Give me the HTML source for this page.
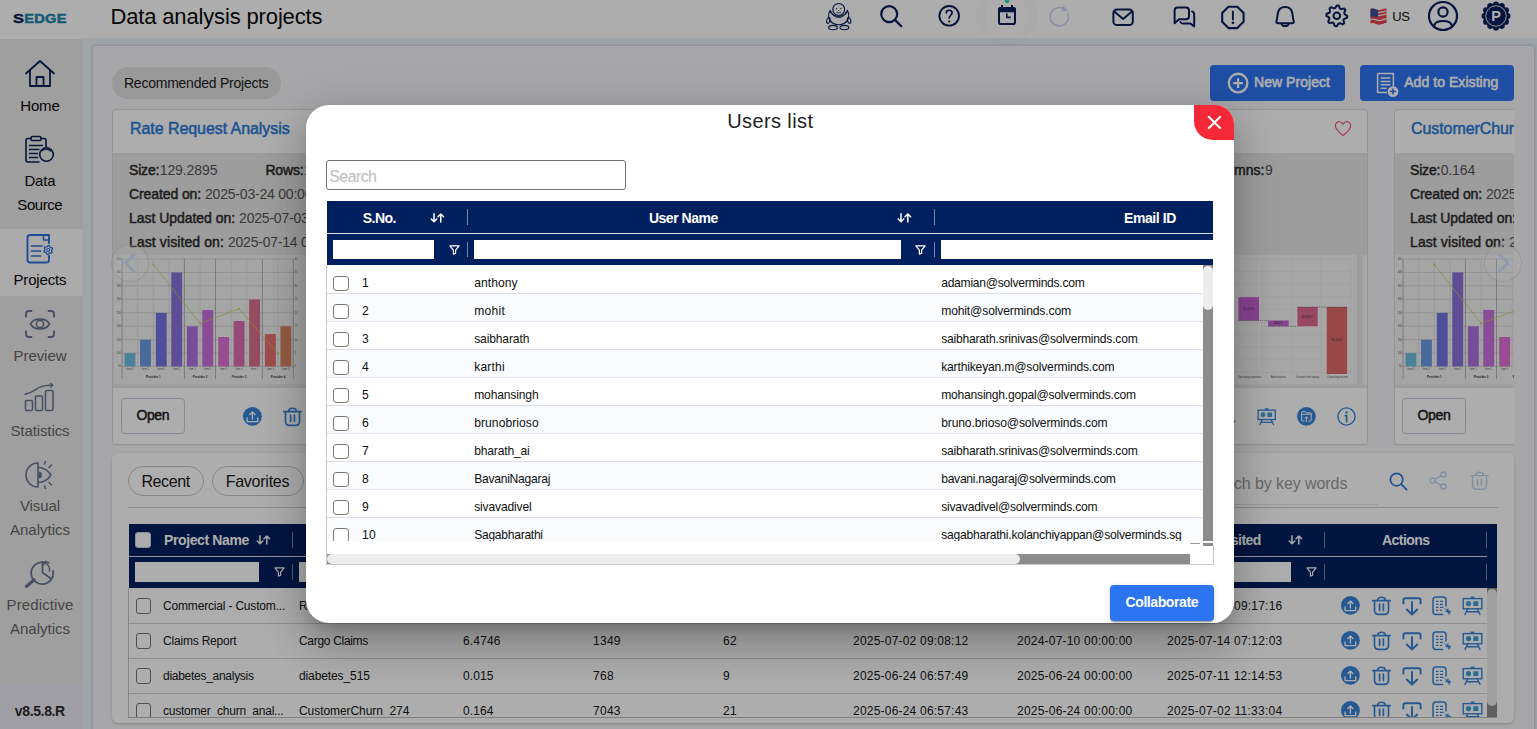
<!DOCTYPE html><html><head><meta charset="utf-8"><title>Data analysis projects</title><style>html,body{margin:0;padding:0;}body{width:1537px;height:729px;overflow:hidden;position:relative;font-family:"Liberation Sans", sans-serif;background:#e9f2f8;}#app{position:absolute;left:0;top:0;width:1537px;height:729px;overflow:hidden;}svg{overflow:visible;display:block}</style></head><body><div id="app">
<div style="position:absolute;left:0px;top:0px;width:1537px;height:729px;background:#e9f2f8;"></div>
<div style="position:absolute;left:0px;top:0px;width:1537px;height:38px;background:#ffffff;"></div>
<div style="position:absolute;left:0px;top:38px;width:83px;height:1px;background:#fff;"></div>
<div style="position:absolute;left:0px;top:39px;width:83px;height:690px;background:#ebebeb;"></div>
<div style="position:absolute;left:0px;top:229px;width:83px;height:67px;background:#fcfcfe;"></div>
<div style="position:absolute;left:0px;top:683px;width:83px;height:46px;background:#ebeaf3;"></div>
<div style="position:absolute;left:93px;top:46px;width:1441px;height:700px;background:#f6f6f9;border-radius:3px;box-shadow:0 0 3px .5px rgba(0,0,0,.15);"></div>
<span id="logo" style="position:absolute;left:12.6px;top:10px;-webkit-text-stroke:.45px currentColor;font-size:13px;line-height:18px;font-weight:700;letter-spacing:0.2px;transform-origin:0 50%;transform:scaleX(1.22);white-space:nowrap;"><span style="color:#0d1b56;font-size:13.5px">S</span><span style="color:#1b86ad;font-size:12px">EDGE</span></span>
<span id="title" style="position:absolute;left:110.40px;top:4.38px;font-size:22px;line-height:26px;color:#0a0a0a;font-weight:400;white-space:nowrap;letter-spacing:-0.146px;">Data analysis projects</span>
<svg style="position:absolute;left:824px;top:0px;" width="30" height="31" viewBox="0 0 30 31" fill="none"><circle cx="14.7" cy="9.4" r="5.9" stroke="#0b1f5c" stroke-width="1.1"/><circle cx="12.6" cy="8.6" r=".7" fill="#0b1f5c"/><circle cx="16.8" cy="8.6" r=".7" fill="#0b1f5c"/><circle cx="14.7" cy="10.6" r=".5" fill="#0b1f5c"/><path d="M12.6 12.4 q2.1 1.2 4.2 0" stroke="#0b1f5c" stroke-width="0.7" stroke-linecap="round" stroke-linejoin="round" /><path d="M6.2 10.4 C3.4 14 4.4 20.6 8.6 23 C12.4 25.2 17 25.2 20.8 23 C25 20.6 26 14 23.2 10.4 C23 13.4 19.6 16.4 14.7 16.4 C9.8 16.4 6.4 13.4 6.2 10.4 Z" stroke="#0b1f5c" stroke-width="1.2" stroke-linecap="round" stroke-linejoin="round" /><path d="M7.4 11.8 C8.4 15.6 11.2 17.6 14.7 17.6 C18.2 17.6 21 15.6 22 11.8" stroke="#0b1f5c" stroke-width="0.8" stroke-linecap="round" stroke-linejoin="round" /><ellipse cx="4.3" cy="20.4" rx="1.6" ry="3" stroke="#0b1f5c" stroke-width="1.1" transform="rotate(14 4.3 20.4)"/><ellipse cx="25.1" cy="20.4" rx="1.6" ry="3" stroke="#0b1f5c" stroke-width="1.1" transform="rotate(-14 25.1 20.4)"/><ellipse cx="9" cy="27.6" rx="4.4" ry="2.2" stroke="#0b1f5c" stroke-width="1.1"/><ellipse cx="20.4" cy="27.6" rx="4.4" ry="2.2" stroke="#0b1f5c" stroke-width="1.1"/></svg>
<svg style="position:absolute;left:878px;top:3px;" width="28" height="28" viewBox="0 0 28 28" fill="none"><circle cx="11.2" cy="11.1" r="8" stroke="#0b1f5c" stroke-width="2.2"/><path d="M17 16.9 L23.3 23.2" stroke="#0b1f5c" stroke-width="2.3" stroke-linecap="round" stroke-linejoin="round" /></svg>
<svg style="position:absolute;left:936px;top:3px;" width="26" height="26" viewBox="0 0 26 26" fill="none"><circle cx="13.2" cy="12.8" r="9.8" stroke="#0b1f5c" stroke-width="1.9"/><path d="M10.3 9.8 C10.3 6.4 16.1 6.4 16.1 9.8 C16.1 12.2 13.2 12.4 13.2 15" stroke="#0b1f5c" stroke-width="1.7" stroke-linecap="round" stroke-linejoin="round" /><circle cx="13.2" cy="18.5" r="1.1" fill="#0b1f5c"/></svg>
<div style="position:absolute;left:976px;top:-15px;width:62px;height:62px;border-radius:50%;box-sizing:border-box;border:10px solid rgba(0,0,0,.016);"></div>
<svg style="position:absolute;left:996px;top:-2px;" width="22" height="28" viewBox="0 0 22 28" fill="none"><circle cx="11" cy="3" r="2.2" fill="#26dcb7"/><rect x="3" y="10" width="16" height="16" rx="1.8" stroke="#0b1f5c" stroke-width="2"/><rect x="2.2" y="9.2" width="17.6" height="5" rx="1.5" fill="#0b1f5c"/><rect x="5" y="7" width="2" height="3" fill="#0b1f5c"/><rect x="15" y="7" width="2" height="3" fill="#0b1f5c"/><path d="M10.8 16 V19.4 H14" stroke="#0b1f5c" stroke-width="1.6" stroke-linecap="round" stroke-linejoin="round" stroke-linecap="butt" stroke-linejoin="miter"/></svg>
<svg style="position:absolute;left:1046px;top:4px;" width="28" height="28" viewBox="0 0 28 28" fill="none"><path d="M21.89 9.40 A9.2 9.2 0 1 1 18.18 4.90" stroke="#cbd4ee" stroke-width="1.6" stroke-linecap="round" stroke-linejoin="round" /><path d="M16.98 1.50 L21.78 6.50 L15.78 7.50 Z" fill="#cbd4ee"/></svg>
<svg style="position:absolute;left:1110px;top:7px;" width="27" height="21" viewBox="0 0 27 21" fill="none"><rect x="3.4" y="2.5" width="19.4" height="15.6" rx="3.6" stroke="#0b1f5c" stroke-width="2"/><path d="M4.6 4.8 L13.1 12 L21.6 4.8" stroke="#0b1f5c" stroke-width="2" stroke-linecap="round" stroke-linejoin="round" /></svg>
<svg style="position:absolute;left:1171px;top:4px;" width="27" height="26" viewBox="0 0 27 26" fill="none"><path d="M6.6 3.5 H15 Q18 3.5 18 6.5 V12.3 Q18 15.3 15 15.3 H8 L3.6 19.3 V6.5 Q3.6 3.5 6.6 3.5 Z" stroke="#0b1f5c" stroke-width="2" stroke-linecap="round" stroke-linejoin="round" /><path d="M21 7.4 Q23.2 8 23.2 10.6 V22.4 L19.4 19.6 H12.4 Q10 19.6 9.4 18" stroke="#0b1f5c" stroke-width="2" stroke-linecap="round" stroke-linejoin="round" /></svg>
<svg style="position:absolute;left:1219px;top:3px;" width="28" height="28" viewBox="0 0 28 28" fill="none"><path d="M9.5 3.7 H18.3 L24.6 10 V18.8 L18.3 25.1 H9.5 L3.2 18.8 V10 Z" stroke="#0b1f5c" stroke-width="2.1" stroke-linecap="round" stroke-linejoin="round" stroke-linejoin="round"/><path d="M13.9 8.4 V16.6" stroke="#0b1f5c" stroke-width="1.9" stroke-linecap="round" stroke-linejoin="round" /><circle cx="13.9" cy="19.8" r="1.35" fill="#0b1f5c"/></svg>
<svg style="position:absolute;left:1273px;top:3px;" width="24" height="28" viewBox="0 0 24 28" fill="none"><path d="M5 20.2 Q3 20.2 3.5 18.2 C4.3 15 4.5 12 4.9 10 C5.7 5.6 8.6 3.9 12.1 3.9 C15.6 3.9 18.5 5.6 19.3 10 C19.7 12 19.9 15 20.7 18.2 Q21.2 20.2 19.2 20.2 Z" stroke="#0b1f5c" stroke-width="2" stroke-linecap="round" stroke-linejoin="round" /><path d="M8.6 20.8 C9 23.8 15.2 23.8 15.6 20.8" stroke="#0b1f5c" stroke-width="1.9" stroke-linecap="round" stroke-linejoin="round" /></svg>
<svg style="position:absolute;left:1324px;top:3px;" width="26" height="26" viewBox="0 0 26 26" fill="none"><path d="M12.80 2.40 L14.83 2.60 L15.86 5.41 L17.24 6.15 L20.15 5.45 L21.45 7.02 L20.19 9.74 L20.65 11.24 L23.20 12.80 L23.00 14.83 L20.19 15.86 L19.45 17.24 L20.15 20.15 L18.58 21.45 L15.86 20.19 L14.36 20.65 L12.80 23.20 L10.77 23.00 L9.74 20.19 L8.36 19.45 L5.45 20.15 L4.15 18.58 L5.41 15.86 L4.95 14.36 L2.40 12.80 L2.60 10.77 L5.41 9.74 L6.15 8.36 L5.45 5.45 L7.02 4.15 L9.74 5.41 L11.24 4.95 Z" stroke="#0b1f5c" stroke-width="2" stroke-linecap="round" stroke-linejoin="round" /><circle cx="12.8" cy="12.8" r="3.3" stroke="#0b1f5c" stroke-width="2"/></svg>
<svg style="position:absolute;left:1369px;top:5.5px;" width="19" height="21" viewBox="0 0 19 21" fill="none"><path d="M1.5 3 C5 1 8 5 11 4 C13.5 3.3 15.5 2 17.5 2.5 V17 C15.5 16.5 13.5 18 11 18.6 C8 19.3 5 15.5 1.5 17.5 Z" fill="#e8404f"/><path d="M1.5 3 C4 1.6 6.5 3.4 9 4 V11.5 C6.5 11 4 9.5 1.5 11 Z" fill="#3f4fa0"/><path d="M9 6.6 C12 7 14.5 5 17.5 5.2 M9 9.6 C12 10 14.5 8 17.5 8.2 M1.5 13.6 C5 11.8 8 15 11 14.6 C13.5 14.2 15.5 12.4 17.5 12.8" stroke="#f4f4f4" stroke-width="1.3"/></svg>
<span id="us" style="position:absolute;left:1392.30px;top:8.60px;font-size:13px;line-height:16px;color:#111;font-weight:400;white-space:nowrap;letter-spacing:-0.531px;">US</span>
<svg style="position:absolute;left:1426px;top:-1px;" width="34" height="34" viewBox="0 0 34 34" fill="none"><circle cx="17" cy="17" r="14" stroke="#0b1f5c" stroke-width="2.2"/><circle cx="17" cy="13" r="4.6" stroke="#0b1f5c" stroke-width="2.2"/><path d="M8.2 26.5 C9.5 20.5 24.5 20.5 25.8 26.5" stroke="#0b1f5c" stroke-width="2.2" stroke-linecap="round" stroke-linejoin="round" /></svg>
<svg style="position:absolute;left:1481px;top:0.8px;" width="30" height="30" viewBox="0 0 30 30" fill="none"><circle cx="26.40" cy="15.00" r="3.1" fill="#0b1f5c"/><circle cx="24.87" cy="20.70" r="3.1" fill="#0b1f5c"/><circle cx="20.70" cy="24.87" r="3.1" fill="#0b1f5c"/><circle cx="15.00" cy="26.40" r="3.1" fill="#0b1f5c"/><circle cx="9.30" cy="24.87" r="3.1" fill="#0b1f5c"/><circle cx="5.13" cy="20.70" r="3.1" fill="#0b1f5c"/><circle cx="3.60" cy="15.00" r="3.1" fill="#0b1f5c"/><circle cx="5.13" cy="9.30" r="3.1" fill="#0b1f5c"/><circle cx="9.30" cy="5.13" r="3.1" fill="#0b1f5c"/><circle cx="15.00" cy="3.60" r="3.1" fill="#0b1f5c"/><circle cx="20.70" cy="5.13" r="3.1" fill="#0b1f5c"/><circle cx="24.87" cy="9.30" r="3.1" fill="#0b1f5c"/><circle cx="15" cy="15" r="12" fill="#0b1f5c"/><circle cx="15" cy="15" r="10.2" stroke="#fff" stroke-width=".8"/><text x="15.2" y="20.2" text-anchor="middle" font-family="Liberation Sans, sans-serif" font-weight="700" font-size="14.5" fill="#fff">P</text></svg>
<svg style="position:absolute;left:23px;top:58px;" width="34" height="32" viewBox="0 0 34 32" fill="none"><path d="M3 15.5 L17 3 L31 15.5" stroke="#0d2057" stroke-width="1.8" stroke-linecap="round" stroke-linejoin="round" /><path d="M7 12.5 V28 H27 V12.5" stroke="#0d2057" stroke-width="1.8" stroke-linecap="round" stroke-linejoin="round" /><path d="M13.5 28 V19 H20.5 V28" stroke="#0d2057" stroke-width="1.8" stroke-linecap="round" stroke-linejoin="round" /></svg>
<span id="sb1" style="position:absolute;left:40.00px;transform:translateX(-50%);top:96.90px;font-size:15px;line-height:18px;color:#0a0a0a;font-weight:400;white-space:nowrap;letter-spacing:-0.129px;margin-left:-0.065px;">Home</span>
<svg style="position:absolute;left:23px;top:134px;" width="34" height="32" viewBox="0 0 34 32" fill="none"><path d="M8 4.5 H5 Q3 4.5 3 6.5 V26 Q3 28 5 28 H16" stroke="#0d2057" stroke-width="1.6" stroke-linecap="round" stroke-linejoin="round" /><path d="M18 4.5 H21 Q23 4.5 23 6.5 V13" stroke="#0d2057" stroke-width="1.6" stroke-linecap="round" stroke-linejoin="round" /><rect x="8" y="2.5" width="10" height="4" rx="1.2" stroke="#0d2057" stroke-width="1.5"/><path d="M6.5 11.5 H19.5 M6.5 15.5 H16 M6.5 19.5 H14.5 M6.5 23.5 H14.5" stroke="#0d2057" stroke-width="1.5" stroke-linecap="round" stroke-linejoin="round" /><circle cx="23.5" cy="20.5" r="6.8" stroke="#0d2057" stroke-width="1.6" fill="#ebebeb"/><path d="M19.3 16.6 A6 6 0 0 1 27.5 17" stroke="#0d2057" stroke-width="1.2" stroke-linecap="round" stroke-linejoin="round" /></svg>
<span id="sb2" style="position:absolute;left:40.00px;transform:translateX(-50%);top:172.10px;font-size:15px;line-height:18px;color:#0a0a0a;font-weight:400;white-space:nowrap;letter-spacing:-0.172px;margin-left:-0.086px;">Data</span>
<span id="sb3" style="position:absolute;left:40.00px;transform:translateX(-50%);top:196.30px;font-size:15px;line-height:18px;color:#0a0a0a;font-weight:400;white-space:nowrap;letter-spacing:-0.422px;margin-left:-0.211px;">Source</span>
<svg style="position:absolute;left:24px;top:232px;" width="34" height="34" viewBox="0 0 34 34" fill="none"><path d="M19.5 3 H6 Q3.5 3 3.5 5.5 V28 Q3.5 30.5 6 30.5 H22.5 Q25 30.5 25 28 V24" stroke="#2f6fdb" stroke-width="1.9" stroke-linecap="round" stroke-linejoin="round" /><path d="M19.5 3 H25 V11" stroke="#2f6fdb" stroke-width="1.9" stroke-linecap="round" stroke-linejoin="round" /><path d="M19.5 3 V8 H25" stroke="#2f6fdb" stroke-width="1.5" stroke-linecap="round" stroke-linejoin="round" /><path d="M7.5 14 H18 M7.5 19 H16.5 M7.5 24 H16.5" stroke="#2f6fdb" stroke-width="1.7" stroke-linecap="round" stroke-linejoin="round" /><path d="M24.20 13.40 L25.39 13.56 L25.90 15.06 L26.60 15.60 L28.18 15.70 L28.64 16.81 L27.60 18.00 L27.48 18.88 L28.18 20.30 L27.45 21.25 L25.90 20.94 L25.08 21.28 L24.20 22.60 L23.01 22.44 L22.50 20.94 L21.80 20.40 L20.22 20.30 L19.76 19.19 L20.80 18.00 L20.92 17.12 L20.22 15.70 L20.95 14.75 L22.50 15.06 L23.32 14.72 Z" stroke="#2f6fdb" stroke-width="1.2" stroke-linecap="round" stroke-linejoin="round" /><circle cx="24.2" cy="18" r="1.5" stroke="#2f6fdb" stroke-width="1.1"/></svg>
<span id="sb4" style="position:absolute;left:40.00px;transform:translateX(-50%);top:270.90px;font-size:15px;line-height:18px;color:#0a0a0a;font-weight:400;white-space:nowrap;letter-spacing:-0.148px;margin-left:-0.074px;">Projects</span>
<svg style="position:absolute;left:23px;top:307px;" width="34" height="34" viewBox="0 0 34 34" fill="none"><path d="M3 9.5 V7 Q3 4 6 4 H8.5 M25.5 4 H28 Q31 4 31 7 V9.5 M31 24.5 V27 Q31 30 28 30 H25.5 M8.5 30 H6 Q3 30 3 27 V24.5" stroke="#68758f" stroke-width="1.8" stroke-linecap="round" stroke-linejoin="round" /><path d="M7.5 17 C11 10.5 23 10.5 26.5 17 C23 23.5 11 23.5 7.5 17 Z" stroke="#68758f" stroke-width="1.6" stroke-linecap="round" stroke-linejoin="round" /><circle cx="17" cy="17" r="3.6" stroke="#68758f" stroke-width="1.6"/></svg>
<span id="sb5" style="position:absolute;left:40.00px;transform:translateX(-50%);top:346.90px;font-size:15px;line-height:18px;color:#666;font-weight:400;white-space:nowrap;letter-spacing:-0.051px;margin-left:-0.025px;">Preview</span>
<svg style="position:absolute;left:23px;top:382px;" width="34" height="32" viewBox="0 0 34 32" fill="none"><rect x="2.5" y="18.5" width="7" height="10" rx="1" stroke="#68758f" stroke-width="1.5"/><rect x="12.5" y="14" width="7" height="14.5" rx="1" stroke="#68758f" stroke-width="1.5"/><rect x="22.5" y="8.5" width="7.5" height="20" rx="1.5" stroke="#68758f" stroke-width="1.5"/><path d="M2.5 12 C9 11 12 8 16 5.5 C20 3.5 25 3.5 29.5 3" stroke="#68758f" stroke-width="1.3" stroke-linecap="round" stroke-linejoin="round" /><path d="M27.5 1.5 L30 3 L27.8 5" stroke="#68758f" stroke-width="1.2" stroke-linecap="round" stroke-linejoin="round" /><circle cx="2.5" cy="12" r="1" fill="#68758f"/></svg>
<span id="sb6" style="position:absolute;left:40.00px;transform:translateX(-50%);top:421.80px;font-size:15px;line-height:18px;color:#666;font-weight:400;white-space:nowrap;letter-spacing:-0.102px;margin-left:-0.051px;">Statistics</span>
<svg style="position:absolute;left:23px;top:458px;" width="34" height="34" viewBox="0 0 34 34" fill="none"><path d="M15 5 A12 12 0 0 0 15 29 Z" stroke="#68758f" stroke-width="1.6" stroke-linecap="round" stroke-linejoin="round" /><path d="M15.5 9.5 C22 9.5 26 14 28 17 C26 20 22 24.5 15.5 24.5" stroke="#68758f" stroke-width="1.6" stroke-linecap="round" stroke-linejoin="round" /><path d="M15.5 13.5 A3.5 3.5 0 0 1 15.5 20.5 Z" fill="#68758f"/><path d="M21.5 6 L22.5 3.5 M26 9.5 L28.5 7 M26 24.5 L28.5 27 M21.5 28 L22.5 30.5" stroke="#68758f" stroke-width="1.5" stroke-linecap="round" stroke-linejoin="round" /></svg>
<span id="sb7" style="position:absolute;left:40.00px;transform:translateX(-50%);top:497.00px;font-size:15px;line-height:18px;color:#666;font-weight:400;white-space:nowrap;letter-spacing:-0.099px;margin-left:-0.050px;">Visual</span>
<span id="sb8" style="position:absolute;left:40.00px;transform:translateX(-50%);top:521.10px;font-size:15px;line-height:18px;color:#666;font-weight:400;white-space:nowrap;letter-spacing:-0.003px;margin-left:-0.002px;">Analytics</span>
<svg style="position:absolute;left:23px;top:557px;" width="34" height="34" viewBox="0 0 34 34" fill="none"><path d="M20.5 5.2 A11 11 0 1 0 30 14" stroke="#68758f" stroke-width="1.8" stroke-linecap="round" stroke-linejoin="round" /><path d="M19.5 5 V15.5 L27.8 21.5" stroke="#68758f" stroke-width="1.7" stroke-linecap="round" stroke-linejoin="round" /><path d="M26.5 14 A8 8 0 0 0 21.5 5.5" stroke="#68758f" stroke-width="1.5" stroke-linecap="round" stroke-linejoin="round" /><path d="M20.5 7.8 L22.2 4.5 L25.8 5.8" stroke="#68758f" stroke-width="1.5" stroke-linecap="round" stroke-linejoin="round" /><path d="M11 23 L3.5 29.5" stroke="#68758f" stroke-width="3.2" stroke-linecap="round" stroke-linejoin="round" /></svg>
<span id="sb9" style="position:absolute;left:40.00px;transform:translateX(-50%);top:596.00px;font-size:15px;line-height:18px;color:#666;font-weight:400;white-space:nowrap;letter-spacing:0.114px;margin-left:0.057px;">Predictive</span>
<span id="sb10" style="position:absolute;left:40.00px;transform:translateX(-50%);top:620.10px;font-size:15px;line-height:18px;color:#666;font-weight:400;white-space:nowrap;letter-spacing:-0.003px;margin-left:-0.002px;">Analytics</span>
<span id="ver" style="position:absolute;left:40.00px;transform:translateX(-50%);top:702.95px;font-size:14px;line-height:17px;color:#2c2c2c;font-weight:700;white-space:nowrap;letter-spacing:-0.367px;margin-left:-0.183px;">v8.5.8.R</span>
<div style="position:absolute;left:112px;top:67px;width:169px;height:32px;background:#e2e2e2;border-radius:16px;"></div>
<span id="pill" style="position:absolute;left:124.00px;top:75.35px;font-size:14px;line-height:17px;color:#1a1a1a;font-weight:400;white-space:nowrap;letter-spacing:-0.239px;">Recommended Projects</span>
<div style="position:absolute;left:1210px;top:65px;width:135px;height:36px;background:#2e75f4;border-radius:4px;"></div>
<svg style="position:absolute;left:1227px;top:72.2px;" width="22" height="22" viewBox="0 0 22 22" fill="none"><circle cx="11.1" cy="11.1" r="9.3" stroke="#fff" stroke-width="2.4"/><path d="M11.1 6.2 V16 M6.2 11.1 H16" stroke="#fff" stroke-width="2.2"/></svg>
<span id="btn1" style="position:absolute;left:1254.00px;top:73.95px;font-size:14px;line-height:17px;color:#fff;font-weight:400;white-space:nowrap;letter-spacing:0.045px;-webkit-text-stroke:.55px #fff;">New Project</span>
<div style="position:absolute;left:1360px;top:65px;width:154px;height:36px;background:#2e75f4;border-radius:4px;"></div>
<svg style="position:absolute;left:1376px;top:72px;" width="24" height="26" viewBox="0 0 24 26" fill="none"><path d="M1.6 1.6 H17.4 V15 M11 20.4 H1.6 V1.6" stroke="#fff" stroke-width="1.5"/><path d="M4.6 6 H14.4 M4.6 9.4 H14.4 M4.6 12.8 H14.4 M4.6 16.2 H10.5" stroke="#fff" stroke-width="1.5"/><circle cx="17" cy="19.6" r="5.4" fill="#fff"/><path d="M17 16.6 V22.6 M14 19.6 H20" stroke="#2e75f4" stroke-width="1.5"/></svg>
<span id="btn2" style="position:absolute;left:1404.20px;top:73.95px;font-size:14px;line-height:17px;color:#fff;font-weight:400;white-space:nowrap;letter-spacing:0.059px;-webkit-text-stroke:.55px #fff;">Add to Existing</span>
<div style="position:absolute;left:112px;top:100px;width:1402px;height:350px;overflow:hidden;"><div style="position:absolute;left:-112px;top:-100px;"><div style="position:absolute;left:112px;top:109px;width:615px;height:336px;box-sizing:border-box;border:1px solid #dadada;border-radius:4px;background:#e8e8e8;overflow:hidden;box-shadow:0 1px 1px rgba(0,0,0,.04);"><div style="position:absolute;left:0;top:0;right:0;height:42.5px;background:#fff;"></div><div style="position:absolute;left:0;top:278px;right:0;height:56px;background:#fff;"></div></div>
<div style="position:absolute;left:754px;top:109px;width:614px;height:336px;box-sizing:border-box;border:1px solid #dadada;border-radius:4px;background:#e8e8e8;overflow:hidden;box-shadow:0 1px 1px rgba(0,0,0,.04);"><div style="position:absolute;left:0;top:0;right:0;height:42.5px;background:#fff;"></div><div style="position:absolute;left:0;top:278px;right:0;height:56px;background:#fff;"></div></div>
<div style="position:absolute;left:1393.9px;top:109px;width:614px;height:336px;box-sizing:border-box;border:1px solid #dadada;border-radius:4px;background:#e8e8e8;overflow:hidden;box-shadow:0 1px 1px rgba(0,0,0,.04);"><div style="position:absolute;left:0;top:0;right:0;height:42.5px;background:#fff;"></div><div style="position:absolute;left:0;top:278px;right:0;height:56px;background:#fff;"></div></div>
<span id="t17" style="position:absolute;left:130.00px;top:118.86px;font-size:16px;line-height:19px;color:#2b7bd6;font-weight:400;white-space:nowrap;letter-spacing:-0.065px;-webkit-text-stroke:.5px currentColor;">Rate Request Analysis</span>
<span id="t18" style="position:absolute;left:129.00px;top:162.15px;font-size:14px;line-height:17px;color:#2e2e2e;font-weight:400;white-space:nowrap;letter-spacing:-0.184px;-webkit-text-stroke:.5px currentColor;">Size:</span>
<span id="t19" style="position:absolute;left:159.70px;top:162.15px;font-size:14px;line-height:17px;color:#555;font-weight:400;white-space:nowrap;letter-spacing:-0.088px;">129.2895</span>
<span id="t20" style="position:absolute;left:265.40px;top:162.15px;font-size:14px;line-height:17px;color:#2e2e2e;font-weight:400;white-space:nowrap;letter-spacing:-0.168px;-webkit-text-stroke:.5px currentColor;">Rows:</span>
<span id="t21" style="position:absolute;left:303.96px;top:162.15px;font-size:14px;line-height:17px;color:#555;font-weight:400;white-space:nowrap;letter-spacing:-0.022px;">15000</span>
<span id="t22" style="position:absolute;left:129.00px;top:186.15px;font-size:14px;line-height:17px;color:#2e2e2e;font-weight:400;white-space:nowrap;letter-spacing:-0.101px;-webkit-text-stroke:.5px currentColor;">Created on:</span>
<span id="t23" style="position:absolute;left:205.06px;top:186.15px;font-size:14px;line-height:17px;color:#555;font-weight:400;white-space:nowrap;letter-spacing:-0.209px;">2025-03-24 00:00:00</span>
<span id="t24" style="position:absolute;left:129.00px;top:210.25px;font-size:14px;line-height:17px;color:#2e2e2e;font-weight:400;white-space:nowrap;letter-spacing:-0.035px;-webkit-text-stroke:.5px currentColor;">Last Updated on:</span>
<span id="t25" style="position:absolute;left:239.09px;top:210.25px;font-size:14px;line-height:17px;color:#555;font-weight:400;white-space:nowrap;letter-spacing:-0.209px;">2025-07-03 06:22:35</span>
<span id="t26" style="position:absolute;left:129.00px;top:234.35px;font-size:14px;line-height:17px;color:#2e2e2e;font-weight:400;white-space:nowrap;letter-spacing:0.095px;-webkit-text-stroke:.5px currentColor;">Last visited on:</span>
<span id="t27" style="position:absolute;left:227.91px;top:234.35px;font-size:14px;line-height:17px;color:#555;font-weight:400;white-space:nowrap;letter-spacing:-0.209px;">2025-07-14 09:17:16</span>
<svg style="position:absolute;left:114px;top:255px;overflow:hidden" width="196" height="129.5" viewBox="0 0 196 129.5"><rect x="0" y="0" width="196" height="129.5" fill="#f4f4f4"/><line x1="8.1" x2="179.3" y1="4.00" y2="4.00" stroke="#cdcdcd" stroke-width=".7"/><line x1="8.1" x2="179.3" y1="17.43" y2="17.43" stroke="#cdcdcd" stroke-width=".7"/><line x1="8.1" x2="179.3" y1="30.86" y2="30.86" stroke="#cdcdcd" stroke-width=".7"/><line x1="8.1" x2="179.3" y1="44.29" y2="44.29" stroke="#cdcdcd" stroke-width=".7"/><line x1="8.1" x2="179.3" y1="57.72" y2="57.72" stroke="#cdcdcd" stroke-width=".7"/><line x1="8.1" x2="179.3" y1="71.15" y2="71.15" stroke="#cdcdcd" stroke-width=".7"/><line x1="8.1" x2="179.3" y1="84.58" y2="84.58" stroke="#cdcdcd" stroke-width=".7"/><line x1="8.1" x2="179.3" y1="98.01" y2="98.01" stroke="#cdcdcd" stroke-width=".7"/><line x1="8.1" x2="179.3" y1="111.44" y2="111.44" stroke="#cdcdcd" stroke-width=".7"/><line x1="23.7" x2="23.7" y1="4.0" y2="111.4" stroke="#d6d6d6" stroke-width=".6"/><line x1="39.4" x2="39.4" y1="4.0" y2="111.4" stroke="#d6d6d6" stroke-width=".6"/><line x1="55.0" x2="55.0" y1="4.0" y2="111.4" stroke="#d6d6d6" stroke-width=".6"/><line x1="86.1" x2="86.1" y1="4.0" y2="111.4" stroke="#d6d6d6" stroke-width=".6"/><line x1="117.3" x2="117.3" y1="4.0" y2="111.4" stroke="#d6d6d6" stroke-width=".6"/><line x1="132.8" x2="132.8" y1="4.0" y2="111.4" stroke="#d6d6d6" stroke-width=".6"/><line x1="164.1" x2="164.1" y1="4.0" y2="111.4" stroke="#d6d6d6" stroke-width=".6"/><line x1="8.1" x2="8.1" y1="4.0" y2="124.2" stroke="#8a8a8a" stroke-width=".6"/><line x1="70.4" x2="70.4" y1="4.0" y2="124.2" stroke="#8a8a8a" stroke-width=".6"/><line x1="101.5" x2="101.5" y1="4.0" y2="124.2" stroke="#8a8a8a" stroke-width=".6"/><line x1="148.4" x2="148.4" y1="4.0" y2="124.2" stroke="#8a8a8a" stroke-width=".6"/><line x1="179.3" x2="179.3" y1="4.0" y2="124.2" stroke="#8a8a8a" stroke-width=".6"/><rect x="10.5" y="98.1" width="10.9" height="13.3" fill="#6fbfe0"/><rect x="26.0" y="84.7" width="10.9" height="26.7" fill="#6b9ee6"/><rect x="41.8" y="57.9" width="10.9" height="53.5" fill="#7277e0"/><rect x="57.3" y="17.4" width="10.9" height="94.0" fill="#8a72dc"/><rect x="72.9" y="71.3" width="10.9" height="40.1" fill="#ae72de"/><rect x="88.3" y="55.0" width="10.9" height="56.4" fill="#cb70de"/><rect x="104.2" y="82.0" width="10.9" height="29.4" fill="#e070d8"/><rect x="119.6" y="66.0" width="10.9" height="45.4" fill="#dd6db2"/><rect x="135.1" y="44.5" width="10.9" height="66.9" fill="#de708e"/><rect x="150.9" y="79.1" width="10.9" height="32.3" fill="#ea716f"/><rect x="166.4" y="71.3" width="10.9" height="40.1" fill="#dd8865"/><polyline points="39.3,9.6 86.1,68.4 125.0,53.8 164.1,98.7" stroke="#c0d54a" stroke-width=".7" fill="none"/><circle cx="39.3" cy="9.6" r="1" fill="#c0d54a"/><circle cx="86.1" cy="68.4" r="1" fill="#c0d54a"/><circle cx="125.0" cy="53.8" r="1" fill="#c0d54a"/><circle cx="164.1" cy="98.7" r="1" fill="#c0d54a"/><text x="7.0" y="5.0" font-size="2.6" text-anchor="end" fill="#555" font-family="Liberation Sans, sans-serif">450</text><text x="7.0" y="18.4" font-size="2.6" text-anchor="end" fill="#555" font-family="Liberation Sans, sans-serif">400</text><text x="7.0" y="31.9" font-size="2.6" text-anchor="end" fill="#555" font-family="Liberation Sans, sans-serif">350</text><text x="7.0" y="45.3" font-size="2.6" text-anchor="end" fill="#555" font-family="Liberation Sans, sans-serif">300</text><text x="7.0" y="58.7" font-size="2.6" text-anchor="end" fill="#555" font-family="Liberation Sans, sans-serif">250</text><text x="7.0" y="72.1" font-size="2.6" text-anchor="end" fill="#555" font-family="Liberation Sans, sans-serif">200</text><text x="7.0" y="85.6" font-size="2.6" text-anchor="end" fill="#555" font-family="Liberation Sans, sans-serif">150</text><text x="7.0" y="99.0" font-size="2.6" text-anchor="end" fill="#555" font-family="Liberation Sans, sans-serif">100</text><text x="7.0" y="112.4" font-size="2.6" text-anchor="end" fill="#555" font-family="Liberation Sans, sans-serif">50</text><text x="180.6" y="5.0" font-size="2.6" fill="#555" font-family="Liberation Sans, sans-serif">40</text><text x="180.6" y="18.4" font-size="2.6" fill="#555" font-family="Liberation Sans, sans-serif">35</text><text x="180.6" y="31.9" font-size="2.6" fill="#555" font-family="Liberation Sans, sans-serif">30</text><text x="180.6" y="45.3" font-size="2.6" fill="#555" font-family="Liberation Sans, sans-serif">25</text><text x="180.6" y="58.7" font-size="2.6" fill="#555" font-family="Liberation Sans, sans-serif">20</text><text x="180.6" y="72.1" font-size="2.6" fill="#555" font-family="Liberation Sans, sans-serif">15</text><text x="180.6" y="85.6" font-size="2.6" fill="#555" font-family="Liberation Sans, sans-serif">10</text><text x="180.6" y="99.0" font-size="2.6" fill="#555" font-family="Liberation Sans, sans-serif">5</text><text x="180.6" y="112.4" font-size="2.6" fill="#555" font-family="Liberation Sans, sans-serif">0</text><text x="15.9" y="115.3" font-size="2.6" text-anchor="middle" fill="#555" font-family="Liberation Sans, sans-serif">Item 3</text><text x="31.4" y="115.3" font-size="2.6" text-anchor="middle" fill="#555" font-family="Liberation Sans, sans-serif">Item 1</text><text x="47.2" y="115.3" font-size="2.6" text-anchor="middle" fill="#555" font-family="Liberation Sans, sans-serif">Item 4</text><text x="62.7" y="115.3" font-size="2.6" text-anchor="middle" fill="#555" font-family="Liberation Sans, sans-serif">Item 2</text><text x="78.3" y="115.3" font-size="2.6" text-anchor="middle" fill="#555" font-family="Liberation Sans, sans-serif">Item 1</text><text x="93.7" y="115.3" font-size="2.6" text-anchor="middle" fill="#555" font-family="Liberation Sans, sans-serif">Item 2</text><text x="109.6" y="115.3" font-size="2.6" text-anchor="middle" fill="#555" font-family="Liberation Sans, sans-serif">Item 3</text><text x="125.0" y="115.3" font-size="2.6" text-anchor="middle" fill="#555" font-family="Liberation Sans, sans-serif">Item 4</text><text x="140.5" y="115.3" font-size="2.6" text-anchor="middle" fill="#555" font-family="Liberation Sans, sans-serif">Item 2</text><text x="156.3" y="115.3" font-size="2.6" text-anchor="middle" fill="#555" font-family="Liberation Sans, sans-serif">Item 3</text><text x="171.8" y="115.3" font-size="2.6" text-anchor="middle" fill="#555" font-family="Liberation Sans, sans-serif">Item 5</text><text x="39.3" y="123.0" font-size="3" font-weight="700" text-anchor="middle" fill="#333" font-family="Liberation Sans, sans-serif">Provider 1</text><text x="86.0" y="123.0" font-size="3" font-weight="700" text-anchor="middle" fill="#333" font-family="Liberation Sans, sans-serif">Provider 2</text><text x="125.0" y="123.0" font-size="3" font-weight="700" text-anchor="middle" fill="#333" font-family="Liberation Sans, sans-serif">Provider 3</text><text x="164.0" y="123.0" font-size="3" font-weight="700" text-anchor="middle" fill="#333" font-family="Liberation Sans, sans-serif">Provider 4</text></svg>
<span id="t28" style="position:absolute;left:1411.00px;top:118.86px;font-size:16px;line-height:19px;color:#2b7bd6;font-weight:400;white-space:nowrap;letter-spacing:-0.079px;-webkit-text-stroke:.5px currentColor;">CustomerChurn_274</span>
<span id="t29" style="position:absolute;left:1410.00px;top:162.15px;font-size:14px;line-height:17px;color:#2e2e2e;font-weight:400;white-space:nowrap;letter-spacing:-0.184px;-webkit-text-stroke:.5px currentColor;">Size:</span>
<span id="t30" style="position:absolute;left:1440.70px;top:162.15px;font-size:14px;line-height:17px;color:#555;font-weight:400;white-space:nowrap;letter-spacing:-0.128px;">0.164</span>
<span id="t31" style="position:absolute;left:1410.00px;top:186.15px;font-size:14px;line-height:17px;color:#2e2e2e;font-weight:400;white-space:nowrap;letter-spacing:-0.101px;-webkit-text-stroke:.5px currentColor;">Created on:</span>
<span id="t32" style="position:absolute;left:1486.06px;top:186.15px;font-size:14px;line-height:17px;color:#555;font-weight:400;white-space:nowrap;letter-spacing:-0.209px;">2025-06-24 00:00:00</span>
<span id="t33" style="position:absolute;left:1410.00px;top:210.25px;font-size:14px;line-height:17px;color:#2e2e2e;font-weight:400;white-space:nowrap;letter-spacing:-0.035px;-webkit-text-stroke:.5px currentColor;">Last Updated on:</span>
<span id="t34" style="position:absolute;left:1520.09px;top:210.25px;font-size:14px;line-height:17px;color:#555;font-weight:400;white-space:nowrap;letter-spacing:-0.209px;">2025-06-24 06:57:43</span>
<span id="t35" style="position:absolute;left:1410.00px;top:234.35px;font-size:14px;line-height:17px;color:#2e2e2e;font-weight:400;white-space:nowrap;letter-spacing:0.095px;-webkit-text-stroke:.5px currentColor;">Last visited on:</span>
<span id="t36" style="position:absolute;left:1508.91px;top:234.35px;font-size:14px;line-height:17px;color:#555;font-weight:400;white-space:nowrap;letter-spacing:-0.155px;">2025-07-02 11:33:04</span>
<svg style="position:absolute;left:1395px;top:255px;overflow:hidden" width="196" height="129.5" viewBox="0 0 196 129.5"><rect x="0" y="0" width="196" height="129.5" fill="#f4f4f4"/><line x1="8.1" x2="179.3" y1="4.00" y2="4.00" stroke="#cdcdcd" stroke-width=".7"/><line x1="8.1" x2="179.3" y1="17.43" y2="17.43" stroke="#cdcdcd" stroke-width=".7"/><line x1="8.1" x2="179.3" y1="30.86" y2="30.86" stroke="#cdcdcd" stroke-width=".7"/><line x1="8.1" x2="179.3" y1="44.29" y2="44.29" stroke="#cdcdcd" stroke-width=".7"/><line x1="8.1" x2="179.3" y1="57.72" y2="57.72" stroke="#cdcdcd" stroke-width=".7"/><line x1="8.1" x2="179.3" y1="71.15" y2="71.15" stroke="#cdcdcd" stroke-width=".7"/><line x1="8.1" x2="179.3" y1="84.58" y2="84.58" stroke="#cdcdcd" stroke-width=".7"/><line x1="8.1" x2="179.3" y1="98.01" y2="98.01" stroke="#cdcdcd" stroke-width=".7"/><line x1="8.1" x2="179.3" y1="111.44" y2="111.44" stroke="#cdcdcd" stroke-width=".7"/><line x1="23.7" x2="23.7" y1="4.0" y2="111.4" stroke="#d6d6d6" stroke-width=".6"/><line x1="39.4" x2="39.4" y1="4.0" y2="111.4" stroke="#d6d6d6" stroke-width=".6"/><line x1="55.0" x2="55.0" y1="4.0" y2="111.4" stroke="#d6d6d6" stroke-width=".6"/><line x1="86.1" x2="86.1" y1="4.0" y2="111.4" stroke="#d6d6d6" stroke-width=".6"/><line x1="117.3" x2="117.3" y1="4.0" y2="111.4" stroke="#d6d6d6" stroke-width=".6"/><line x1="132.8" x2="132.8" y1="4.0" y2="111.4" stroke="#d6d6d6" stroke-width=".6"/><line x1="164.1" x2="164.1" y1="4.0" y2="111.4" stroke="#d6d6d6" stroke-width=".6"/><line x1="8.1" x2="8.1" y1="4.0" y2="124.2" stroke="#8a8a8a" stroke-width=".6"/><line x1="70.4" x2="70.4" y1="4.0" y2="124.2" stroke="#8a8a8a" stroke-width=".6"/><line x1="101.5" x2="101.5" y1="4.0" y2="124.2" stroke="#8a8a8a" stroke-width=".6"/><line x1="148.4" x2="148.4" y1="4.0" y2="124.2" stroke="#8a8a8a" stroke-width=".6"/><line x1="179.3" x2="179.3" y1="4.0" y2="124.2" stroke="#8a8a8a" stroke-width=".6"/><rect x="10.5" y="98.1" width="10.9" height="13.3" fill="#6fbfe0"/><rect x="26.0" y="84.7" width="10.9" height="26.7" fill="#6b9ee6"/><rect x="41.8" y="57.9" width="10.9" height="53.5" fill="#7277e0"/><rect x="57.3" y="17.4" width="10.9" height="94.0" fill="#8a72dc"/><rect x="72.9" y="71.3" width="10.9" height="40.1" fill="#ae72de"/><rect x="88.3" y="55.0" width="10.9" height="56.4" fill="#cb70de"/><rect x="104.2" y="82.0" width="10.9" height="29.4" fill="#e070d8"/><rect x="119.6" y="66.0" width="10.9" height="45.4" fill="#dd6db2"/><rect x="135.1" y="44.5" width="10.9" height="66.9" fill="#de708e"/><rect x="150.9" y="79.1" width="10.9" height="32.3" fill="#ea716f"/><rect x="166.4" y="71.3" width="10.9" height="40.1" fill="#dd8865"/><polyline points="39.3,9.6 86.1,68.4 125.0,53.8 164.1,98.7" stroke="#c0d54a" stroke-width=".7" fill="none"/><circle cx="39.3" cy="9.6" r="1" fill="#c0d54a"/><circle cx="86.1" cy="68.4" r="1" fill="#c0d54a"/><circle cx="125.0" cy="53.8" r="1" fill="#c0d54a"/><circle cx="164.1" cy="98.7" r="1" fill="#c0d54a"/><text x="7.0" y="5.0" font-size="2.6" text-anchor="end" fill="#555" font-family="Liberation Sans, sans-serif">450</text><text x="7.0" y="18.4" font-size="2.6" text-anchor="end" fill="#555" font-family="Liberation Sans, sans-serif">400</text><text x="7.0" y="31.9" font-size="2.6" text-anchor="end" fill="#555" font-family="Liberation Sans, sans-serif">350</text><text x="7.0" y="45.3" font-size="2.6" text-anchor="end" fill="#555" font-family="Liberation Sans, sans-serif">300</text><text x="7.0" y="58.7" font-size="2.6" text-anchor="end" fill="#555" font-family="Liberation Sans, sans-serif">250</text><text x="7.0" y="72.1" font-size="2.6" text-anchor="end" fill="#555" font-family="Liberation Sans, sans-serif">200</text><text x="7.0" y="85.6" font-size="2.6" text-anchor="end" fill="#555" font-family="Liberation Sans, sans-serif">150</text><text x="7.0" y="99.0" font-size="2.6" text-anchor="end" fill="#555" font-family="Liberation Sans, sans-serif">100</text><text x="7.0" y="112.4" font-size="2.6" text-anchor="end" fill="#555" font-family="Liberation Sans, sans-serif">50</text><text x="180.6" y="5.0" font-size="2.6" fill="#555" font-family="Liberation Sans, sans-serif">40</text><text x="180.6" y="18.4" font-size="2.6" fill="#555" font-family="Liberation Sans, sans-serif">35</text><text x="180.6" y="31.9" font-size="2.6" fill="#555" font-family="Liberation Sans, sans-serif">30</text><text x="180.6" y="45.3" font-size="2.6" fill="#555" font-family="Liberation Sans, sans-serif">25</text><text x="180.6" y="58.7" font-size="2.6" fill="#555" font-family="Liberation Sans, sans-serif">20</text><text x="180.6" y="72.1" font-size="2.6" fill="#555" font-family="Liberation Sans, sans-serif">15</text><text x="180.6" y="85.6" font-size="2.6" fill="#555" font-family="Liberation Sans, sans-serif">10</text><text x="180.6" y="99.0" font-size="2.6" fill="#555" font-family="Liberation Sans, sans-serif">5</text><text x="180.6" y="112.4" font-size="2.6" fill="#555" font-family="Liberation Sans, sans-serif">0</text><text x="15.9" y="115.3" font-size="2.6" text-anchor="middle" fill="#555" font-family="Liberation Sans, sans-serif">Item 3</text><text x="31.4" y="115.3" font-size="2.6" text-anchor="middle" fill="#555" font-family="Liberation Sans, sans-serif">Item 1</text><text x="47.2" y="115.3" font-size="2.6" text-anchor="middle" fill="#555" font-family="Liberation Sans, sans-serif">Item 4</text><text x="62.7" y="115.3" font-size="2.6" text-anchor="middle" fill="#555" font-family="Liberation Sans, sans-serif">Item 2</text><text x="78.3" y="115.3" font-size="2.6" text-anchor="middle" fill="#555" font-family="Liberation Sans, sans-serif">Item 1</text><text x="93.7" y="115.3" font-size="2.6" text-anchor="middle" fill="#555" font-family="Liberation Sans, sans-serif">Item 2</text><text x="109.6" y="115.3" font-size="2.6" text-anchor="middle" fill="#555" font-family="Liberation Sans, sans-serif">Item 3</text><text x="125.0" y="115.3" font-size="2.6" text-anchor="middle" fill="#555" font-family="Liberation Sans, sans-serif">Item 4</text><text x="140.5" y="115.3" font-size="2.6" text-anchor="middle" fill="#555" font-family="Liberation Sans, sans-serif">Item 2</text><text x="156.3" y="115.3" font-size="2.6" text-anchor="middle" fill="#555" font-family="Liberation Sans, sans-serif">Item 3</text><text x="171.8" y="115.3" font-size="2.6" text-anchor="middle" fill="#555" font-family="Liberation Sans, sans-serif">Item 5</text><text x="39.3" y="123.0" font-size="3" font-weight="700" text-anchor="middle" fill="#333" font-family="Liberation Sans, sans-serif">Provider 1</text><text x="86.0" y="123.0" font-size="3" font-weight="700" text-anchor="middle" fill="#333" font-family="Liberation Sans, sans-serif">Provider 2</text><text x="125.0" y="123.0" font-size="3" font-weight="700" text-anchor="middle" fill="#333" font-family="Liberation Sans, sans-serif">Provider 3</text><text x="164.0" y="123.0" font-size="3" font-weight="700" text-anchor="middle" fill="#333" font-family="Liberation Sans, sans-serif">Provider 4</text></svg>
<span id="c2col" style="position:absolute;left:1264.50px;transform:translateX(-100%);top:162.15px;font-size:14px;line-height:17px;color:#2e2e2e;font-weight:400;white-space:nowrap;letter-spacing:0.031px;margin-left:0.031px;-webkit-text-stroke:.5px currentColor;">Columns:</span>
<span id="t38" style="position:absolute;left:1265.00px;top:162.15px;font-size:14px;line-height:17px;color:#555;font-weight:400;white-space:nowrap;letter-spacing:-0.031px;">9</span>
<svg style="position:absolute;left:1334px;top:120px;" width="18" height="18" viewBox="0 0 18 18" fill="none"><path d="M9 15.6 C3 11 1.4 8.4 1.4 5.8 C1.4 3.4 3.2 1.8 5.2 1.8 C6.8 1.8 8.2 2.8 9 4.2 C9.8 2.8 11.2 1.8 12.8 1.8 C14.8 1.8 16.6 3.4 16.6 5.8 C16.6 8.4 15 11 9 15.6 Z" stroke="#ee4266" stroke-width="1.1"/></svg>
<svg style="position:absolute;left:1227.3px;top:255px;overflow:hidden" width="130" height="129.5" viewBox="0 0 130 129.5"><rect x="0" y="0" width="130" height="129.5" fill="#f6f6f6"/><line x1="0" x2="124" y1="4.0" y2="4.0" stroke="#e6e6e6" stroke-width=".5"/><line x1="0" x2="124" y1="16.6" y2="16.6" stroke="#e6e6e6" stroke-width=".5"/><line x1="0" x2="124" y1="29.2" y2="29.2" stroke="#e6e6e6" stroke-width=".5"/><line x1="0" x2="124" y1="41.8" y2="41.8" stroke="#e6e6e6" stroke-width=".5"/><line x1="0" x2="124" y1="54.4" y2="54.4" stroke="#e6e6e6" stroke-width=".5"/><line x1="0" x2="124" y1="67.0" y2="67.0" stroke="#e6e6e6" stroke-width=".5"/><line x1="0" x2="124" y1="79.6" y2="79.6" stroke="#e6e6e6" stroke-width=".5"/><line x1="0" x2="124" y1="92.2" y2="92.2" stroke="#e6e6e6" stroke-width=".5"/><line x1="0" x2="124" y1="104.8" y2="104.8" stroke="#e6e6e6" stroke-width=".5"/><line x1="0" x2="124" y1="117.4" y2="117.4" stroke="#e6e6e6" stroke-width=".5"/><line x1="5.5" x2="5.5" y1="4" y2="120" stroke="#e2e2e2" stroke-width=".5"/><line x1="35" x2="35" y1="4" y2="120" stroke="#e2e2e2" stroke-width=".5"/><line x1="64.5" x2="64.5" y1="4" y2="120" stroke="#e2e2e2" stroke-width=".5"/><line x1="94" x2="94" y1="4" y2="120" stroke="#e2e2e2" stroke-width=".5"/><line x1="123.5" x2="123.5" y1="4" y2="120" stroke="#e2e2e2" stroke-width=".5"/><rect x="11.4" y="42.2" width="20.6" height="23.3" fill="#c964d6"/><rect x="41.1" y="65.5" width="20.6" height="5.8" fill="#c964d6"/><rect x="70.4" y="52.0" width="20.3" height="19.3" fill="#e0688f"/><rect x="99.7" y="52.0" width="20.4" height="67.0" fill="#e26a6a"/><path d="M11.4 65.5 H41.1 M41.1 71.3 H70.4 M70.4 52 H120.1" stroke="#444" stroke-width=".5" stroke-dasharray="1 .8"/><text x="21.7" y="54.5" font-size="2.7" text-anchor="middle" fill="#333" font-family="Liberation Sans, sans-serif">$1,700 K</text><text x="51.4" y="69.2" font-size="2.7" text-anchor="middle" fill="#333" font-family="Liberation Sans, sans-serif">$450 K</text><text x="80.5" y="62.5" font-size="2.7" text-anchor="middle" fill="#333" font-family="Liberation Sans, sans-serif">$1,400 K</text><text x="109.9" y="86.0" font-size="2.7" text-anchor="middle" fill="#333" font-family="Liberation Sans, sans-serif">$5,200 K</text><text x="22.7" y="122.6" font-size="2.7" text-anchor="middle" fill="#555" font-family="Liberation Sans, sans-serif">Operating expenses</text><text x="51.2" y="122.6" font-size="2.7" text-anchor="middle" fill="#555" font-family="Liberation Sans, sans-serif">Amortisation</text><text x="80.7" y="122.6" font-size="2.7" text-anchor="middle" fill="#555" font-family="Liberation Sans, sans-serif">Income from equity</text><text x="110.7" y="122.6" font-size="2.7" text-anchor="middle" fill="#555" font-family="Liberation Sans, sans-serif">Operating income</text></svg>
<div style="position:absolute;left:1362.5px;top:255px;width:4px;height:129.5px;background:#f6f6f6;"></div>
<div style="position:absolute;left:120.7px;top:398px;width:64.5px;height:35.5px;box-sizing:border-box;border:1px solid #c5cbe0;border-radius:4px;background:#fff;"></div><span id="t39" style="position:absolute;left:153.00px;transform:translateX(-50%);top:407.05px;font-size:14px;line-height:17px;color:#1f1f1f;font-weight:400;white-space:nowrap;letter-spacing:-0.351px;margin-left:-0.175px;-webkit-text-stroke:.5px currentColor;">Open</span>
<div style="position:absolute;left:1401.8px;top:398px;width:64.5px;height:35.5px;box-sizing:border-box;border:1px solid #c5cbe0;border-radius:4px;background:#fff;"></div><span id="t40" style="position:absolute;left:1434.10px;transform:translateX(-50%);top:407.05px;font-size:14px;line-height:17px;color:#1f1f1f;font-weight:400;white-space:nowrap;letter-spacing:-0.351px;margin-left:-0.175px;-webkit-text-stroke:.5px currentColor;">Open</span>
<svg style="position:absolute;left:243.0px;top:407.0px;" width="18.8" height="18.8" viewBox="0 0 18.8 18.8" fill="none"><circle cx="9.4" cy="9.4" r="9.4" fill="#3884d8"/><path d="M9.4 12.0 V5.2 M6.9 7.5 L9.4 5.0 L11.9 7.5" stroke="#fff" stroke-width="1.35" stroke-linecap="round" stroke-linejoin="round"/><path d="M4.1000000000000005 11.0 V14.600000000000001 H14.7 V11.0" stroke="#fff" stroke-width="1.35" stroke-linecap="round" stroke-linejoin="round"/></svg>
<svg style="position:absolute;left:283px;top:407.2px;" width="19" height="19" viewBox="0 0 19 19" fill="none"><path d="M.8 4.6 H18.2 M5.6 4.4 C5.6 .2 13.4 .2 13.4 4.4 M2.5 4.8 V14.2 Q2.5 18.3 6.6 18.3 H12.4 Q16.5 18.3 16.5 14.2 V4.8 M7.6 8.2 V14.4 M11.4 8.2 V14.4" stroke="#3884d8" stroke-width="1.7" stroke-linecap="round" stroke-linejoin="round"/></svg>
<svg style="position:absolute;left:1226px;top:420px;" width="10" height="6" viewBox="0 0 10 6" fill="none"><path d="M1 1 L5 5 L9 1" stroke="#3884d8" stroke-width="1.6" stroke-linecap="round"/></svg>
<svg style="position:absolute;left:1256.8px;top:406.8px;" width="19.4" height="19" viewBox="0 0 21 19" fill="none"><rect x="1.2" y="2.6" width="18.6" height="10.2" stroke="#3884d8" stroke-width="1.4"/><rect x="8.6" y=".6" width="3.8" height="2" fill="#3884d8"/><circle cx="6.5" cy="7.6" r="2.6" fill="#3b9fd6"/><rect x="11.3" y="5.3" width="5" height="4.7" fill="#3b9fd6"/><path d="M5.8 12.8 L3 18.4 M15.2 12.8 L18 18.4 M4.4 15.8 H16.6" stroke="#3884d8" stroke-width="1.4" stroke-linecap="round"/></svg>
<svg style="position:absolute;left:1297.1px;top:406.8px;" width="18.8" height="18.8" viewBox="0 0 18.8 18.8" fill="none"><circle cx="9.4" cy="9.4" r="9.4" fill="#3884d8"/><path d="M4.6 7 V5.6 Q4.6 4.6 5.6 4.6 H8.2 L9.4 5.8 H13.2 Q14.2 5.8 14.2 6.8 V7 M4.4 7.2 H14.4 M4.6 7.2 V13 Q4.6 14 5.6 14 H7.2 M11.6 14 H13.2 Q14.2 14 14.2 13 V7.2" stroke="#fff" stroke-width="1" stroke-linecap="round"/><path d="M9.4 14.6 V10 M7.8 11.4 L9.4 9.8 L11 11.4" stroke="#fff" stroke-width="1" stroke-linecap="round" stroke-linejoin="round"/></svg>
<svg style="position:absolute;left:1337px;top:406.7px;" width="19" height="19" viewBox="0 0 19 19" fill="none"><circle cx="9.5" cy="9.5" r="8.6" stroke="#3884d8" stroke-width="1.4"/><path d="M8.3 8.7 H9.6 V14.6" stroke="#3884d8" stroke-width="1.7" stroke-linecap="round" stroke-linejoin="round"/><circle cx="9.5" cy="5.5" r="1.15" fill="#3884d8"/></svg></div></div>
<div style="position:absolute;left:111px;top:243.60000000000002px;width:38px;height:38px;box-sizing:border-box;border-radius:50%;border:1.3px solid rgba(0,0,0,.1);background:rgba(255,255,255,.24);"><svg style="position:absolute;left:9px;top:6px" width="18" height="24" viewBox="0 0 18 24" fill="none"><path d="M13 3.5 L4.5 12 L13 20.5" stroke="#d3e4fa" stroke-width="3" stroke-linecap="round" stroke-linejoin="round"/></svg></div>
<div style="position:absolute;left:1484px;top:243.60000000000002px;width:38px;height:38px;box-sizing:border-box;border-radius:50%;border:1.3px solid rgba(0,0,0,.1);background:rgba(255,255,255,.24);"><svg style="position:absolute;left:10px;top:6px" width="18" height="24" viewBox="0 0 18 24" fill="none"><path d="M4.5 3.5 L13 12 L4.5 20.5" stroke="#d3e4fa" stroke-width="3" stroke-linecap="round" stroke-linejoin="round"/></svg></div>
<div style="position:absolute;left:112px;top:453px;width:1402px;height:270px;background:#fff;border-radius:6px;box-shadow:0 1px 3px rgba(0,0,0,.2);"></div>
<div style="position:absolute;left:128px;top:466px;width:75.5px;height:29.5px;box-sizing:border-box;border:1px solid #c2c3c9;border-radius:15px;"></div>
<span id="t41" style="position:absolute;left:141.40px;top:471.96px;font-size:16px;line-height:19px;color:#1a1a1a;font-weight:400;white-space:nowrap;letter-spacing:-0.376px;">Recent</span>
<div style="position:absolute;left:212px;top:466px;width:91.6px;height:29.5px;box-sizing:border-box;border:1px solid #c2c3c9;border-radius:15px;"></div>
<span id="t42" style="position:absolute;left:225.70px;top:471.96px;font-size:16px;line-height:19px;color:#1a1a1a;font-weight:400;white-space:nowrap;letter-spacing:-0.251px;">Favorites</span>
<span id="sbk" style="position:absolute;left:1347.40px;transform:translateX(-100%);top:473.86px;font-size:16px;line-height:19px;color:#9a9a9a;font-weight:400;white-space:nowrap;letter-spacing:-0.085px;margin-left:-0.085px;">Search by key words</span>
<div style="position:absolute;left:1196px;top:504px;width:181.7px;height:1px;background:#e4e4e8;"></div>
<div style="position:absolute;left:128px;top:507px;width:1369.6px;height:1px;background:#cfcfcf;"></div>
<svg style="position:absolute;left:1388px;top:470.5px;" width="21" height="21" viewBox="0 0 21 21" fill="none"><circle cx="8.6" cy="8.6" r="6.2" stroke="#2b7bd6" stroke-width="1.7"/><path d="M13.2 13.2 L18.6 18.6" stroke="#2b7bd6" stroke-width="1.8" stroke-linecap="round"/></svg>
<svg style="position:absolute;left:1429px;top:471px;" width="19" height="19" viewBox="0 0 19 19" fill="none"><circle cx="14.4" cy="3.6" r="2.6" stroke="#bcd0ea" stroke-width="1.3"/><circle cx="3.8" cy="9.5" r="2.6" stroke="#bcd0ea" stroke-width="1.3"/><circle cx="14.4" cy="15.4" r="2.6" stroke="#bcd0ea" stroke-width="1.3"/><path d="M6.2 8.2 L12 4.9 M6.2 10.8 L12 14.1" stroke="#bcd0ea" stroke-width="1.3"/></svg>
<svg style="position:absolute;left:1470px;top:471px;" width="19" height="19" viewBox="0 0 19 19" fill="none"><path d="M.8 4.6 H18.2 M5.6 4.4 C5.6 .2 13.4 .2 13.4 4.4 M2.5 4.8 V14.2 Q2.5 18.3 6.6 18.3 H12.4 Q16.5 18.3 16.5 14.2 V4.8 M7.6 8.2 V14.4 M11.4 8.2 V14.4" stroke="#bcd0ea" stroke-width="1.4" stroke-linecap="round" stroke-linejoin="round"/></svg>
<div style="position:absolute;left:112px;top:510px;width:1402px;height:208px;overflow:hidden;"><div style="position:absolute;left:-112px;top:-510px;"><div style="position:absolute;left:129px;top:524px;width:1368.4px;height:64px;background:#001f5f;"></div>
<div style="position:absolute;left:129px;top:556px;width:1358px;height:1px;background:rgba(255,255,255,.85);"></div>
<div style="position:absolute;left:292.0px;top:532px;width:1px;height:16px;background:rgba(255,255,255,.45);"></div>
<div style="position:absolute;left:292.0px;top:564px;width:1px;height:16px;background:rgba(255,255,255,.45);"></div>
<div style="position:absolute;left:1323.8px;top:532px;width:1px;height:16px;background:rgba(255,255,255,.45);"></div>
<div style="position:absolute;left:1323.8px;top:564px;width:1px;height:16px;background:rgba(255,255,255,.45);"></div>
<div style="position:absolute;left:1486.0px;top:532px;width:1px;height:16px;background:rgba(255,255,255,.45);"></div>
<div style="position:absolute;left:1486.0px;top:564px;width:1px;height:16px;background:rgba(255,255,255,.45);"></div>
<div style="position:absolute;left:135px;top:532px;width:16px;height:16px;background:#fff;border-radius:3px;box-sizing:border-box;border:1px solid #cfd3dc;"></div>
<span id="th1" style="position:absolute;left:164.00px;top:531.85px;font-size:14px;line-height:17px;color:#fff;font-weight:700;white-space:nowrap;letter-spacing:-0.380px;">Project Name</span>
<svg style="position:absolute;left:255.6px;top:535.2px;" width="15" height="10" viewBox="0 0 15 10" fill="none"><path d="M4 .8 V8.6 M1.2 6 L4 8.8 L6.8 6 M10.8 9 V1.2 M8 3.8 L10.8 1 L13.6 3.8" stroke="#fff" stroke-width="1.5" stroke-linecap="round" stroke-linejoin="round"/></svg>
<svg style="position:absolute;left:1287.6px;top:535.2px;" width="15" height="10" viewBox="0 0 15 10" fill="none"><path d="M4 .8 V8.6 M1.2 6 L4 8.8 L6.8 6 M10.8 9 V1.2 M8 3.8 L10.8 1 L13.6 3.8" stroke="#fff" stroke-width="1.5" stroke-linecap="round" stroke-linejoin="round"/></svg>
<span id="th8" style="position:absolute;left:1261.40px;transform:translateX(-100%);top:531.85px;font-size:14px;line-height:17px;color:#fff;font-weight:700;white-space:nowrap;letter-spacing:-0.513px;margin-left:-0.513px;">Last Visited</span>
<span id="th9" style="position:absolute;left:1406.00px;transform:translateX(-50%);top:531.85px;font-size:14px;line-height:17px;color:#fff;font-weight:700;white-space:nowrap;letter-spacing:-0.566px;margin-left:-0.283px;">Actions</span>
<div style="position:absolute;left:135px;top:562.4px;width:123.6px;height:20px;background:#fff;"></div>
<div style="position:absolute;left:1167px;top:562.4px;width:123.8px;height:20px;background:#fff;"></div>
<div style="position:absolute;left:299px;top:562.4px;width:120px;height:20px;background:#fff;"></div>
<svg style="position:absolute;left:273.6px;top:567px;" width="11" height="10" viewBox="0 0 11 10" fill="none"><path d="M.9 .9 H10.1 L6.6 5.2 V8.2 L4.4 9.2 V5.2 Z" stroke="#fff" stroke-width="1.2" stroke-linejoin="round"/></svg>
<svg style="position:absolute;left:1305.6px;top:567px;" width="11" height="10" viewBox="0 0 11 10" fill="none"><path d="M.9 .9 H10.1 L6.6 5.2 V8.2 L4.4 9.2 V5.2 Z" stroke="#fff" stroke-width="1.2" stroke-linejoin="round"/></svg>
<div style="position:absolute;left:129px;top:622.5px;width:1358px;height:1px;background:#d2d2d4;"></div>
<div style="position:absolute;left:135.5px;top:598px;width:15.5px;height:15.5px;box-sizing:border-box;border:1.3px solid #6e7787;border-radius:3px;background:#fff;"></div>
<span id="t47" style="position:absolute;left:163.00px;top:598.74px;font-size:12px;line-height:14px;color:#161616;font-weight:400;white-space:nowrap;letter-spacing:-0.176px;">Commercial - Custom...</span>
<span id="t48" style="position:absolute;left:299.00px;top:598.74px;font-size:12px;line-height:14px;color:#161616;font-weight:400;white-space:nowrap;letter-spacing:-0.258px;">Rate Request Analysis</span>
<span id="t49" style="position:absolute;left:463.00px;top:598.74px;font-size:12px;line-height:14px;color:#161616;font-weight:400;white-space:nowrap;letter-spacing:0.186px;">129.2895</span>
<span id="t50" style="position:absolute;left:593.00px;top:598.74px;font-size:12px;line-height:14px;color:#161616;font-weight:400;white-space:nowrap;letter-spacing:0.284px;">15000</span>
<span id="t51" style="position:absolute;left:723.00px;top:598.74px;font-size:12px;line-height:14px;color:#161616;font-weight:400;white-space:nowrap;letter-spacing:0.280px;">17</span>
<span id="t52" style="position:absolute;left:853.00px;top:598.74px;font-size:12px;line-height:14px;color:#161616;font-weight:400;white-space:nowrap;letter-spacing:0.210px;">2025-07-03 06:22:35</span>
<span id="t53" style="position:absolute;left:1017.00px;top:598.74px;font-size:12px;line-height:14px;color:#161616;font-weight:400;white-space:nowrap;letter-spacing:0.210px;">2025-03-24 00:00:00</span>
<span id="t54" style="position:absolute;left:1167.00px;top:598.74px;font-size:12px;line-height:14px;color:#161616;font-weight:400;white-space:nowrap;letter-spacing:0.210px;">2025-07-14 09:17:16</span>
<svg style="position:absolute;left:1340.8999999999999px;top:595.9px;" width="18.8" height="18.8" viewBox="0 0 18.8 18.8" fill="none"><circle cx="9.4" cy="9.4" r="9.4" fill="#3884d8"/><path d="M9.4 12.0 V5.2 M6.9 7.5 L9.4 5.0 L11.9 7.5" stroke="#fff" stroke-width="1.35" stroke-linecap="round" stroke-linejoin="round"/><path d="M4.1000000000000005 11.0 V14.600000000000001 H14.7 V11.0" stroke="#fff" stroke-width="1.35" stroke-linecap="round" stroke-linejoin="round"/></svg>
<svg style="position:absolute;left:1372px;top:595.6999999999999px;" width="19" height="19" viewBox="0 0 19 19" fill="none"><path d="M.8 4.6 H18.2 M5.6 4.4 C5.6 .2 13.4 .2 13.4 4.4 M2.5 4.8 V14.2 Q2.5 18.3 6.6 18.3 H12.4 Q16.5 18.3 16.5 14.2 V4.8 M7.6 8.2 V14.4 M11.4 8.2 V14.4" stroke="#3884d8" stroke-width="1.7" stroke-linecap="round" stroke-linejoin="round"/></svg>
<svg style="position:absolute;left:1401.6px;top:596.5999999999999px;" width="20" height="20" viewBox="0 0 20 20" fill="none"><path d="M1.4 6.6 V3.2 Q1.4 1.2 3.4 1.2 H16.6 Q18.6 1.2 18.6 3.2 V6.6 M10 5 V17 M4.8 12.6 L10 17.4 L15.2 12.6" stroke="#3884d8" stroke-width="2" stroke-linecap="round" stroke-linejoin="round"/></svg>
<svg style="position:absolute;left:1431.6px;top:596.3px;" width="20" height="20" viewBox="0 0 20 20" fill="none"><path d="M14 10 V4 Q14 1 11 1 H4 Q1 1 1 4 V15.4 Q1 18.4 4 18.4 H10.6" stroke="#3884d8" stroke-width="1.5" stroke-linecap="round"/><path d="M4 5.4 H6.4 M8 5.4 H11 M4 8.4 H6.4 M8 8.4 H11 M4 11.4 H6.4 M8 11.4 H11 M4 14.4 H6.4 M8 14.4 H10" stroke="#3884d8" stroke-width="1.2"/><path d="M11.6 11.8 L15 14.6" stroke="#3884d8" stroke-width="1" stroke-dasharray="1.2 .8"/><path d="M13.6 15.4 L16 12.6 L16.4 14.8 L18.8 15.2 L17 18.6 L16.4 16.4 Z" fill="#3884d8" stroke="#3884d8" stroke-width=".6" stroke-linejoin="round"/></svg>
<svg style="position:absolute;left:1461.6px;top:595.6999999999999px;" width="21" height="19" viewBox="0 0 21 19" fill="none"><rect x="1.2" y="2.6" width="18.6" height="10.2" stroke="#3884d8" stroke-width="1.4"/><rect x="8.6" y=".6" width="3.8" height="2" fill="#3884d8"/><circle cx="6.5" cy="7.6" r="2.6" fill="#3b9fd6"/><rect x="11.3" y="5.3" width="5" height="4.7" fill="#3b9fd6"/><path d="M5.8 12.8 L3 18.4 M15.2 12.8 L18 18.4 M4.4 15.8 H16.6" stroke="#3884d8" stroke-width="1.4" stroke-linecap="round"/></svg>
<div style="position:absolute;left:129px;top:657.5px;width:1358px;height:1px;background:#d2d2d4;"></div>
<div style="position:absolute;left:135.5px;top:633px;width:15.5px;height:15.5px;box-sizing:border-box;border:1.3px solid #6e7787;border-radius:3px;background:#fff;"></div>
<span id="t55" style="position:absolute;left:163.00px;top:633.74px;font-size:12px;line-height:14px;color:#161616;font-weight:400;white-space:nowrap;letter-spacing:-0.195px;">Claims Report</span>
<span id="t56" style="position:absolute;left:299.00px;top:633.74px;font-size:12px;line-height:14px;color:#161616;font-weight:400;white-space:nowrap;letter-spacing:-0.308px;">Cargo Claims</span>
<span id="t57" style="position:absolute;left:463.00px;top:633.74px;font-size:12px;line-height:14px;color:#161616;font-weight:400;white-space:nowrap;letter-spacing:0.154px;">6.4746</span>
<span id="t58" style="position:absolute;left:593.00px;top:633.74px;font-size:12px;line-height:14px;color:#161616;font-weight:400;white-space:nowrap;letter-spacing:0.284px;">1349</span>
<span id="t59" style="position:absolute;left:723.00px;top:633.74px;font-size:12px;line-height:14px;color:#161616;font-weight:400;white-space:nowrap;letter-spacing:0.280px;">62</span>
<span id="t60" style="position:absolute;left:853.00px;top:633.74px;font-size:12px;line-height:14px;color:#161616;font-weight:400;white-space:nowrap;letter-spacing:0.210px;">2025-07-02 09:08:12</span>
<span id="t61" style="position:absolute;left:1017.00px;top:633.74px;font-size:12px;line-height:14px;color:#161616;font-weight:400;white-space:nowrap;letter-spacing:0.210px;">2024-07-10 00:00:00</span>
<span id="t62" style="position:absolute;left:1167.00px;top:633.74px;font-size:12px;line-height:14px;color:#161616;font-weight:400;white-space:nowrap;letter-spacing:0.210px;">2025-07-14 07:12:03</span>
<svg style="position:absolute;left:1340.8999999999999px;top:630.9px;" width="18.8" height="18.8" viewBox="0 0 18.8 18.8" fill="none"><circle cx="9.4" cy="9.4" r="9.4" fill="#3884d8"/><path d="M9.4 12.0 V5.2 M6.9 7.5 L9.4 5.0 L11.9 7.5" stroke="#fff" stroke-width="1.35" stroke-linecap="round" stroke-linejoin="round"/><path d="M4.1000000000000005 11.0 V14.600000000000001 H14.7 V11.0" stroke="#fff" stroke-width="1.35" stroke-linecap="round" stroke-linejoin="round"/></svg>
<svg style="position:absolute;left:1372px;top:630.6999999999999px;" width="19" height="19" viewBox="0 0 19 19" fill="none"><path d="M.8 4.6 H18.2 M5.6 4.4 C5.6 .2 13.4 .2 13.4 4.4 M2.5 4.8 V14.2 Q2.5 18.3 6.6 18.3 H12.4 Q16.5 18.3 16.5 14.2 V4.8 M7.6 8.2 V14.4 M11.4 8.2 V14.4" stroke="#3884d8" stroke-width="1.7" stroke-linecap="round" stroke-linejoin="round"/></svg>
<svg style="position:absolute;left:1401.6px;top:631.5999999999999px;" width="20" height="20" viewBox="0 0 20 20" fill="none"><path d="M1.4 6.6 V3.2 Q1.4 1.2 3.4 1.2 H16.6 Q18.6 1.2 18.6 3.2 V6.6 M10 5 V17 M4.8 12.6 L10 17.4 L15.2 12.6" stroke="#3884d8" stroke-width="2" stroke-linecap="round" stroke-linejoin="round"/></svg>
<svg style="position:absolute;left:1431.6px;top:631.3px;" width="20" height="20" viewBox="0 0 20 20" fill="none"><path d="M14 10 V4 Q14 1 11 1 H4 Q1 1 1 4 V15.4 Q1 18.4 4 18.4 H10.6" stroke="#3884d8" stroke-width="1.5" stroke-linecap="round"/><path d="M4 5.4 H6.4 M8 5.4 H11 M4 8.4 H6.4 M8 8.4 H11 M4 11.4 H6.4 M8 11.4 H11 M4 14.4 H6.4 M8 14.4 H10" stroke="#3884d8" stroke-width="1.2"/><path d="M11.6 11.8 L15 14.6" stroke="#3884d8" stroke-width="1" stroke-dasharray="1.2 .8"/><path d="M13.6 15.4 L16 12.6 L16.4 14.8 L18.8 15.2 L17 18.6 L16.4 16.4 Z" fill="#3884d8" stroke="#3884d8" stroke-width=".6" stroke-linejoin="round"/></svg>
<svg style="position:absolute;left:1461.6px;top:630.6999999999999px;" width="21" height="19" viewBox="0 0 21 19" fill="none"><rect x="1.2" y="2.6" width="18.6" height="10.2" stroke="#3884d8" stroke-width="1.4"/><rect x="8.6" y=".6" width="3.8" height="2" fill="#3884d8"/><circle cx="6.5" cy="7.6" r="2.6" fill="#3b9fd6"/><rect x="11.3" y="5.3" width="5" height="4.7" fill="#3b9fd6"/><path d="M5.8 12.8 L3 18.4 M15.2 12.8 L18 18.4 M4.4 15.8 H16.6" stroke="#3884d8" stroke-width="1.4" stroke-linecap="round"/></svg>
<div style="position:absolute;left:129px;top:692.5px;width:1358px;height:1px;background:#d2d2d4;"></div>
<div style="position:absolute;left:135.5px;top:668px;width:15.5px;height:15.5px;box-sizing:border-box;border:1.3px solid #6e7787;border-radius:3px;background:#fff;"></div>
<span id="t63" style="position:absolute;left:163.00px;top:668.74px;font-size:12px;line-height:14px;color:#161616;font-weight:400;white-space:nowrap;letter-spacing:-0.277px;">diabetes_analysis</span>
<span id="t64" style="position:absolute;left:299.00px;top:668.74px;font-size:12px;line-height:14px;color:#161616;font-weight:400;white-space:nowrap;letter-spacing:-0.109px;">diabetes_515</span>
<span id="t65" style="position:absolute;left:463.00px;top:668.74px;font-size:12px;line-height:14px;color:#161616;font-weight:400;white-space:nowrap;letter-spacing:0.127px;">0.015</span>
<span id="t66" style="position:absolute;left:593.00px;top:668.74px;font-size:12px;line-height:14px;color:#161616;font-weight:400;white-space:nowrap;letter-spacing:0.282px;">768</span>
<span id="t67" style="position:absolute;left:723.00px;top:668.74px;font-size:12px;line-height:14px;color:#161616;font-weight:400;white-space:nowrap;letter-spacing:0.272px;">9</span>
<span id="t68" style="position:absolute;left:853.00px;top:668.74px;font-size:12px;line-height:14px;color:#161616;font-weight:400;white-space:nowrap;letter-spacing:0.210px;">2025-06-24 06:57:49</span>
<span id="t69" style="position:absolute;left:1017.00px;top:668.74px;font-size:12px;line-height:14px;color:#161616;font-weight:400;white-space:nowrap;letter-spacing:0.210px;">2025-06-24 00:00:00</span>
<span id="t70" style="position:absolute;left:1167.00px;top:668.74px;font-size:12px;line-height:14px;color:#161616;font-weight:400;white-space:nowrap;letter-spacing:0.256px;">2025-07-11 12:14:53</span>
<svg style="position:absolute;left:1340.8999999999999px;top:665.9px;" width="18.8" height="18.8" viewBox="0 0 18.8 18.8" fill="none"><circle cx="9.4" cy="9.4" r="9.4" fill="#3884d8"/><path d="M9.4 12.0 V5.2 M6.9 7.5 L9.4 5.0 L11.9 7.5" stroke="#fff" stroke-width="1.35" stroke-linecap="round" stroke-linejoin="round"/><path d="M4.1000000000000005 11.0 V14.600000000000001 H14.7 V11.0" stroke="#fff" stroke-width="1.35" stroke-linecap="round" stroke-linejoin="round"/></svg>
<svg style="position:absolute;left:1372px;top:665.6999999999999px;" width="19" height="19" viewBox="0 0 19 19" fill="none"><path d="M.8 4.6 H18.2 M5.6 4.4 C5.6 .2 13.4 .2 13.4 4.4 M2.5 4.8 V14.2 Q2.5 18.3 6.6 18.3 H12.4 Q16.5 18.3 16.5 14.2 V4.8 M7.6 8.2 V14.4 M11.4 8.2 V14.4" stroke="#3884d8" stroke-width="1.7" stroke-linecap="round" stroke-linejoin="round"/></svg>
<svg style="position:absolute;left:1401.6px;top:666.5999999999999px;" width="20" height="20" viewBox="0 0 20 20" fill="none"><path d="M1.4 6.6 V3.2 Q1.4 1.2 3.4 1.2 H16.6 Q18.6 1.2 18.6 3.2 V6.6 M10 5 V17 M4.8 12.6 L10 17.4 L15.2 12.6" stroke="#3884d8" stroke-width="2" stroke-linecap="round" stroke-linejoin="round"/></svg>
<svg style="position:absolute;left:1431.6px;top:666.3px;" width="20" height="20" viewBox="0 0 20 20" fill="none"><path d="M14 10 V4 Q14 1 11 1 H4 Q1 1 1 4 V15.4 Q1 18.4 4 18.4 H10.6" stroke="#3884d8" stroke-width="1.5" stroke-linecap="round"/><path d="M4 5.4 H6.4 M8 5.4 H11 M4 8.4 H6.4 M8 8.4 H11 M4 11.4 H6.4 M8 11.4 H11 M4 14.4 H6.4 M8 14.4 H10" stroke="#3884d8" stroke-width="1.2"/><path d="M11.6 11.8 L15 14.6" stroke="#3884d8" stroke-width="1" stroke-dasharray="1.2 .8"/><path d="M13.6 15.4 L16 12.6 L16.4 14.8 L18.8 15.2 L17 18.6 L16.4 16.4 Z" fill="#3884d8" stroke="#3884d8" stroke-width=".6" stroke-linejoin="round"/></svg>
<svg style="position:absolute;left:1461.6px;top:665.6999999999999px;" width="21" height="19" viewBox="0 0 21 19" fill="none"><rect x="1.2" y="2.6" width="18.6" height="10.2" stroke="#3884d8" stroke-width="1.4"/><rect x="8.6" y=".6" width="3.8" height="2" fill="#3884d8"/><circle cx="6.5" cy="7.6" r="2.6" fill="#3b9fd6"/><rect x="11.3" y="5.3" width="5" height="4.7" fill="#3b9fd6"/><path d="M5.8 12.8 L3 18.4 M15.2 12.8 L18 18.4 M4.4 15.8 H16.6" stroke="#3884d8" stroke-width="1.4" stroke-linecap="round"/></svg>
<div style="position:absolute;left:129px;top:727.5px;width:1358px;height:1px;background:#d2d2d4;"></div>
<div style="position:absolute;left:135.5px;top:703px;width:15.5px;height:15.5px;box-sizing:border-box;border:1.3px solid #6e7787;border-radius:3px;background:#fff;"></div>
<span id="t71" style="position:absolute;left:163.00px;top:703.74px;font-size:12px;line-height:14px;color:#161616;font-weight:400;white-space:nowrap;letter-spacing:-0.227px;">customer_churn_anal...</span>
<span id="t72" style="position:absolute;left:299.00px;top:703.74px;font-size:12px;line-height:14px;color:#161616;font-weight:400;white-space:nowrap;letter-spacing:-0.065px;">CustomerChurn_274</span>
<span id="t73" style="position:absolute;left:463.00px;top:703.74px;font-size:12px;line-height:14px;color:#161616;font-weight:400;white-space:nowrap;letter-spacing:0.127px;">0.164</span>
<span id="t74" style="position:absolute;left:593.00px;top:703.74px;font-size:12px;line-height:14px;color:#161616;font-weight:400;white-space:nowrap;letter-spacing:0.284px;">7043</span>
<span id="t75" style="position:absolute;left:723.00px;top:703.74px;font-size:12px;line-height:14px;color:#161616;font-weight:400;white-space:nowrap;letter-spacing:0.280px;">21</span>
<span id="t76" style="position:absolute;left:853.00px;top:703.74px;font-size:12px;line-height:14px;color:#161616;font-weight:400;white-space:nowrap;letter-spacing:0.210px;">2025-06-24 06:57:43</span>
<span id="t77" style="position:absolute;left:1017.00px;top:703.74px;font-size:12px;line-height:14px;color:#161616;font-weight:400;white-space:nowrap;letter-spacing:0.210px;">2025-06-24 00:00:00</span>
<span id="t78" style="position:absolute;left:1167.00px;top:703.74px;font-size:12px;line-height:14px;color:#161616;font-weight:400;white-space:nowrap;letter-spacing:0.256px;">2025-07-02 11:33:04</span>
<svg style="position:absolute;left:1340.8999999999999px;top:700.9px;" width="18.8" height="18.8" viewBox="0 0 18.8 18.8" fill="none"><circle cx="9.4" cy="9.4" r="9.4" fill="#3884d8"/><path d="M9.4 12.0 V5.2 M6.9 7.5 L9.4 5.0 L11.9 7.5" stroke="#fff" stroke-width="1.35" stroke-linecap="round" stroke-linejoin="round"/><path d="M4.1000000000000005 11.0 V14.600000000000001 H14.7 V11.0" stroke="#fff" stroke-width="1.35" stroke-linecap="round" stroke-linejoin="round"/></svg>
<svg style="position:absolute;left:1372px;top:700.6999999999999px;" width="19" height="19" viewBox="0 0 19 19" fill="none"><path d="M.8 4.6 H18.2 M5.6 4.4 C5.6 .2 13.4 .2 13.4 4.4 M2.5 4.8 V14.2 Q2.5 18.3 6.6 18.3 H12.4 Q16.5 18.3 16.5 14.2 V4.8 M7.6 8.2 V14.4 M11.4 8.2 V14.4" stroke="#3884d8" stroke-width="1.7" stroke-linecap="round" stroke-linejoin="round"/></svg>
<svg style="position:absolute;left:1401.6px;top:701.5999999999999px;" width="20" height="20" viewBox="0 0 20 20" fill="none"><path d="M1.4 6.6 V3.2 Q1.4 1.2 3.4 1.2 H16.6 Q18.6 1.2 18.6 3.2 V6.6 M10 5 V17 M4.8 12.6 L10 17.4 L15.2 12.6" stroke="#3884d8" stroke-width="2" stroke-linecap="round" stroke-linejoin="round"/></svg>
<svg style="position:absolute;left:1431.6px;top:701.3px;" width="20" height="20" viewBox="0 0 20 20" fill="none"><path d="M14 10 V4 Q14 1 11 1 H4 Q1 1 1 4 V15.4 Q1 18.4 4 18.4 H10.6" stroke="#3884d8" stroke-width="1.5" stroke-linecap="round"/><path d="M4 5.4 H6.4 M8 5.4 H11 M4 8.4 H6.4 M8 8.4 H11 M4 11.4 H6.4 M8 11.4 H11 M4 14.4 H6.4 M8 14.4 H10" stroke="#3884d8" stroke-width="1.2"/><path d="M11.6 11.8 L15 14.6" stroke="#3884d8" stroke-width="1" stroke-dasharray="1.2 .8"/><path d="M13.6 15.4 L16 12.6 L16.4 14.8 L18.8 15.2 L17 18.6 L16.4 16.4 Z" fill="#3884d8" stroke="#3884d8" stroke-width=".6" stroke-linejoin="round"/></svg>
<svg style="position:absolute;left:1461.6px;top:700.6999999999999px;" width="21" height="19" viewBox="0 0 21 19" fill="none"><rect x="1.2" y="2.6" width="18.6" height="10.2" stroke="#3884d8" stroke-width="1.4"/><rect x="8.6" y=".6" width="3.8" height="2" fill="#3884d8"/><circle cx="6.5" cy="7.6" r="2.6" fill="#3b9fd6"/><rect x="11.3" y="5.3" width="5" height="4.7" fill="#3b9fd6"/><path d="M5.8 12.8 L3 18.4 M15.2 12.8 L18 18.4 M4.4 15.8 H16.6" stroke="#3884d8" stroke-width="1.4" stroke-linecap="round"/></svg>
<div style="position:absolute;left:1487px;top:588px;width:10.4px;height:140px;background:#8c8c8c;"></div>
<div style="position:absolute;left:1487px;top:589px;width:10.4px;height:117px;background:#ececec;border-radius:5px;"></div>
<div style="position:absolute;left:128.4px;top:588px;width:1px;height:130px;background:#c4c4c4;"></div>
<div style="position:absolute;left:128.4px;top:717px;width:1369px;height:1px;background:#bdbdbd;"></div></div></div>
<div style="position:absolute;left:0px;top:0px;width:1537px;height:729px;background:rgba(0,0,0,.32);"></div>
<div style="position:absolute;left:306px;top:105px;width:928.4px;height:518px;background:#fff;border-radius:23px 19px 21px 23px;box-shadow:0 11px 15px -7px rgba(0,0,0,.2),0 24px 38px 3px rgba(0,0,0,.14),0 9px 46px 8px rgba(0,0,0,.12);"></div>
<div style="position:absolute;left:1194px;top:105px;width:40.4px;height:35px;background:#f42837;border-radius:0 19px 0 19px;"><svg style="position:absolute;left:13px;top:10px" width="15" height="15" viewBox="0 0 15 15" fill="none"><path d="M1.2 1.2 L13.8 13.8 M13.8 1.2 L1.2 13.8" stroke="#fff" stroke-width="2.1"/></svg></div>
<span id="mtitle" style="position:absolute;left:727.20px;top:109.27px;font-size:20px;line-height:24px;color:#222;font-weight:400;white-space:nowrap;letter-spacing:0.392px;">Users list</span>
<div style="position:absolute;left:326.4px;top:160px;width:300px;height:30.4px;box-sizing:border-box;border:1px solid #707070;border-radius:3px;background:#fff;"></div>
<span id="msearch" style="position:absolute;left:329.30px;top:166.96px;font-size:16px;line-height:19px;color:#bcbcbc;font-weight:400;white-space:nowrap;letter-spacing:-0.601px;">Search</span>
<div style="position:absolute;left:326.8px;top:201px;width:886.6px;height:64px;background:#001f5f;"></div>
<div style="position:absolute;left:326.8px;top:233px;width:886.6px;height:1px;background:rgba(255,255,255,.88);"></div>
<div style="position:absolute;left:466.7px;top:209px;width:1px;height:16px;background:rgba(255,255,255,.45);"></div>
<div style="position:absolute;left:466.7px;top:242px;width:1px;height:15px;background:rgba(255,255,255,.45);"></div>
<div style="position:absolute;left:933.9px;top:209px;width:1px;height:16px;background:rgba(255,255,255,.45);"></div>
<div style="position:absolute;left:933.9px;top:242px;width:1px;height:15px;background:rgba(255,255,255,.45);"></div>
<span id="mh1" style="position:absolute;left:362.80px;top:209.95px;font-size:14px;line-height:17px;color:#fff;font-weight:700;white-space:nowrap;letter-spacing:-0.567px;">S.No.</span>
<span id="mh2" style="position:absolute;left:648.90px;top:209.95px;font-size:14px;line-height:17px;color:#fff;font-weight:700;white-space:nowrap;letter-spacing:-0.466px;">User Name</span>
<span id="mh3" style="position:absolute;left:1124.00px;top:209.95px;font-size:14px;line-height:17px;color:#fff;font-weight:700;white-space:nowrap;letter-spacing:-0.411px;">Email ID</span>
<svg style="position:absolute;left:429.6px;top:212.8px;" width="15" height="10" viewBox="0 0 15 10" fill="none"><path d="M4 .8 V8.6 M1.2 6 L4 8.8 L6.8 6 M10.8 9 V1.2 M8 3.8 L10.8 1 L13.6 3.8" stroke="#fff" stroke-width="1.5" stroke-linecap="round" stroke-linejoin="round"/></svg>
<svg style="position:absolute;left:897.4px;top:212.8px;" width="15" height="10" viewBox="0 0 15 10" fill="none"><path d="M4 .8 V8.6 M1.2 6 L4 8.8 L6.8 6 M10.8 9 V1.2 M8 3.8 L10.8 1 L13.6 3.8" stroke="#fff" stroke-width="1.5" stroke-linecap="round" stroke-linejoin="round"/></svg>
<div style="position:absolute;left:333px;top:239.6px;width:100.8px;height:19.6px;background:#fff;"></div>
<div style="position:absolute;left:474.2px;top:239.6px;width:426.6px;height:19.6px;background:#fff;"></div>
<div style="position:absolute;left:941.2px;top:239.6px;width:272.2px;height:19.6px;background:#fff;"></div>
<svg style="position:absolute;left:448.6px;top:244.8px;" width="11" height="10" viewBox="0 0 11 10" fill="none"><path d="M.9 .9 H10.1 L6.6 5.2 V8.2 L4.4 9.2 V5.2 Z" stroke="#fff" stroke-width="1.2" stroke-linejoin="round"/></svg>
<svg style="position:absolute;left:915px;top:244.8px;" width="11" height="10" viewBox="0 0 11 10" fill="none"><path d="M.9 .9 H10.1 L6.6 5.2 V8.2 L4.4 9.2 V5.2 Z" stroke="#fff" stroke-width="1.2" stroke-linejoin="round"/></svg>
<div style="position:absolute;left:326px;top:265px;width:888px;height:275.8px;overflow:hidden;"><div style="position:absolute;left:-326px;top:-265px;"><div style="position:absolute;left:327px;top:266px;width:876.4px;height:28px;background:#ffffff;box-sizing:border-box;border-bottom:1px solid #d9dee8;"></div>
<div style="position:absolute;left:333.4px;top:275.6px;width:15.2px;height:15.2px;box-sizing:border-box;border:1.4px solid #767676;border-radius:3.2px;background:#fff;"></div>
<span id="t84" style="position:absolute;left:362.00px;top:275.81px;font-size:12.1px;line-height:15px;color:#101010;font-weight:400;white-space:nowrap;letter-spacing:0.284px;">1</span>
<span id="t85" style="position:absolute;left:474.20px;top:275.81px;font-size:12.1px;line-height:15px;color:#101010;font-weight:400;white-space:nowrap;letter-spacing:0.060px;">anthony</span>
<span id="t86" style="position:absolute;left:941.20px;top:275.81px;font-size:12.1px;line-height:15px;color:#101010;font-weight:400;white-space:nowrap;letter-spacing:-0.264px;">adamian@solverminds.com</span>
<div style="position:absolute;left:327px;top:294px;width:876.4px;height:28px;background:#f9fbfd;box-sizing:border-box;border-bottom:1px solid #d9dee8;"></div>
<div style="position:absolute;left:333.4px;top:303.6px;width:15.2px;height:15.2px;box-sizing:border-box;border:1.4px solid #767676;border-radius:3.2px;background:#fff;"></div>
<span id="t87" style="position:absolute;left:362.00px;top:303.81px;font-size:12.1px;line-height:15px;color:#101010;font-weight:400;white-space:nowrap;letter-spacing:0.284px;">2</span>
<span id="t88" style="position:absolute;left:474.20px;top:303.81px;font-size:12.1px;line-height:15px;color:#101010;font-weight:400;white-space:nowrap;letter-spacing:0.246px;">mohit</span>
<span id="t89" style="position:absolute;left:941.20px;top:303.81px;font-size:12.1px;line-height:15px;color:#101010;font-weight:400;white-space:nowrap;letter-spacing:-0.136px;">mohit@solverminds.com</span>
<div style="position:absolute;left:327px;top:322px;width:876.4px;height:28px;background:#ffffff;box-sizing:border-box;border-bottom:1px solid #d9dee8;"></div>
<div style="position:absolute;left:333.4px;top:331.6px;width:15.2px;height:15.2px;box-sizing:border-box;border:1.4px solid #767676;border-radius:3.2px;background:#fff;"></div>
<span id="t90" style="position:absolute;left:362.00px;top:331.81px;font-size:12.1px;line-height:15px;color:#101010;font-weight:400;white-space:nowrap;letter-spacing:0.284px;">3</span>
<span id="t91" style="position:absolute;left:474.20px;top:331.81px;font-size:12.1px;line-height:15px;color:#101010;font-weight:400;white-space:nowrap;letter-spacing:-0.145px;">saibharath</span>
<span id="t92" style="position:absolute;left:941.20px;top:331.81px;font-size:12.1px;line-height:15px;color:#101010;font-weight:400;white-space:nowrap;letter-spacing:-0.214px;">saibharath.srinivas@solverminds.com</span>
<div style="position:absolute;left:327px;top:350px;width:876.4px;height:28px;background:#f9fbfd;box-sizing:border-box;border-bottom:1px solid #d9dee8;"></div>
<div style="position:absolute;left:333.4px;top:359.6px;width:15.2px;height:15.2px;box-sizing:border-box;border:1.4px solid #767676;border-radius:3.2px;background:#fff;"></div>
<span id="t93" style="position:absolute;left:362.00px;top:359.81px;font-size:12.1px;line-height:15px;color:#101010;font-weight:400;white-space:nowrap;letter-spacing:0.284px;">4</span>
<span id="t94" style="position:absolute;left:474.20px;top:359.81px;font-size:12.1px;line-height:15px;color:#101010;font-weight:400;white-space:nowrap;letter-spacing:0.164px;">karthi</span>
<span id="t95" style="position:absolute;left:941.20px;top:359.81px;font-size:12.1px;line-height:15px;color:#101010;font-weight:400;white-space:nowrap;letter-spacing:-0.176px;">karthikeyan.m@solverminds.com</span>
<div style="position:absolute;left:327px;top:378px;width:876.4px;height:28px;background:#ffffff;box-sizing:border-box;border-bottom:1px solid #d9dee8;"></div>
<div style="position:absolute;left:333.4px;top:387.6px;width:15.2px;height:15.2px;box-sizing:border-box;border:1.4px solid #767676;border-radius:3.2px;background:#fff;"></div>
<span id="t96" style="position:absolute;left:362.00px;top:387.81px;font-size:12.1px;line-height:15px;color:#101010;font-weight:400;white-space:nowrap;letter-spacing:0.284px;">5</span>
<span id="t97" style="position:absolute;left:474.20px;top:387.81px;font-size:12.1px;line-height:15px;color:#101010;font-weight:400;white-space:nowrap;letter-spacing:-0.162px;">mohansingh</span>
<span id="t98" style="position:absolute;left:941.20px;top:387.81px;font-size:12.1px;line-height:15px;color:#101010;font-weight:400;white-space:nowrap;letter-spacing:-0.222px;">mohansingh.gopal@solverminds.com</span>
<div style="position:absolute;left:327px;top:406px;width:876.4px;height:28px;background:#f9fbfd;box-sizing:border-box;border-bottom:1px solid #d9dee8;"></div>
<div style="position:absolute;left:333.4px;top:415.6px;width:15.2px;height:15.2px;box-sizing:border-box;border:1.4px solid #767676;border-radius:3.2px;background:#fff;"></div>
<span id="t99" style="position:absolute;left:362.00px;top:415.81px;font-size:12.1px;line-height:15px;color:#101010;font-weight:400;white-space:nowrap;letter-spacing:0.284px;">6</span>
<span id="t100" style="position:absolute;left:474.20px;top:415.81px;font-size:12.1px;line-height:15px;color:#101010;font-weight:400;white-space:nowrap;letter-spacing:0.065px;">brunobrioso</span>
<span id="t101" style="position:absolute;left:941.20px;top:415.81px;font-size:12.1px;line-height:15px;color:#101010;font-weight:400;white-space:nowrap;letter-spacing:-0.139px;">bruno.brioso@solverminds.com</span>
<div style="position:absolute;left:327px;top:434px;width:876.4px;height:28px;background:#ffffff;box-sizing:border-box;border-bottom:1px solid #d9dee8;"></div>
<div style="position:absolute;left:333.4px;top:443.6px;width:15.2px;height:15.2px;box-sizing:border-box;border:1.4px solid #767676;border-radius:3.2px;background:#fff;"></div>
<span id="t102" style="position:absolute;left:362.00px;top:443.81px;font-size:12.1px;line-height:15px;color:#101010;font-weight:400;white-space:nowrap;letter-spacing:0.284px;">7</span>
<span id="t103" style="position:absolute;left:474.20px;top:443.81px;font-size:12.1px;line-height:15px;color:#101010;font-weight:400;white-space:nowrap;letter-spacing:-0.181px;">bharath_ai</span>
<span id="t104" style="position:absolute;left:941.20px;top:443.81px;font-size:12.1px;line-height:15px;color:#101010;font-weight:400;white-space:nowrap;letter-spacing:-0.214px;">saibharath.srinivas@solverminds.com</span>
<div style="position:absolute;left:327px;top:462px;width:876.4px;height:28px;background:#f9fbfd;box-sizing:border-box;border-bottom:1px solid #d9dee8;"></div>
<div style="position:absolute;left:333.4px;top:471.6px;width:15.2px;height:15.2px;box-sizing:border-box;border:1.4px solid #767676;border-radius:3.2px;background:#fff;"></div>
<span id="t105" style="position:absolute;left:362.00px;top:471.81px;font-size:12.1px;line-height:15px;color:#101010;font-weight:400;white-space:nowrap;letter-spacing:0.284px;">8</span>
<span id="t106" style="position:absolute;left:474.20px;top:471.81px;font-size:12.1px;line-height:15px;color:#101010;font-weight:400;white-space:nowrap;letter-spacing:-0.264px;">BavaniNagaraj</span>
<span id="t107" style="position:absolute;left:941.20px;top:471.81px;font-size:12.1px;line-height:15px;color:#101010;font-weight:400;white-space:nowrap;letter-spacing:-0.262px;">bavani.nagaraj@solverminds.com</span>
<div style="position:absolute;left:327px;top:490px;width:876.4px;height:28px;background:#ffffff;box-sizing:border-box;border-bottom:1px solid #d9dee8;"></div>
<div style="position:absolute;left:333.4px;top:499.6px;width:15.2px;height:15.2px;box-sizing:border-box;border:1.4px solid #767676;border-radius:3.2px;background:#fff;"></div>
<span id="t108" style="position:absolute;left:362.00px;top:499.81px;font-size:12.1px;line-height:15px;color:#101010;font-weight:400;white-space:nowrap;letter-spacing:0.284px;">9</span>
<span id="t109" style="position:absolute;left:474.20px;top:499.81px;font-size:12.1px;line-height:15px;color:#101010;font-weight:400;white-space:nowrap;letter-spacing:-0.172px;">sivavadivel</span>
<span id="t110" style="position:absolute;left:941.20px;top:499.81px;font-size:12.1px;line-height:15px;color:#101010;font-weight:400;white-space:nowrap;letter-spacing:-0.221px;">sivavadivel@solverminds.com</span>
<div style="position:absolute;left:327px;top:518px;width:876.4px;height:28px;background:#f9fbfd;box-sizing:border-box;border-bottom:1px solid #d9dee8;"></div>
<div style="position:absolute;left:333.4px;top:527.6px;width:15.2px;height:15.2px;box-sizing:border-box;border:1.4px solid #767676;border-radius:3.2px;background:#fff;"></div>
<span id="t111" style="position:absolute;left:362.00px;top:527.81px;font-size:12.1px;line-height:15px;color:#101010;font-weight:400;white-space:nowrap;letter-spacing:0.292px;">10</span>
<span id="t112" style="position:absolute;left:474.20px;top:527.81px;font-size:12.1px;line-height:15px;color:#101010;font-weight:400;white-space:nowrap;letter-spacing:-0.281px;">Sagabharathi</span>
<span id="t113" style="position:absolute;left:941.20px;top:527.81px;font-size:12.1px;line-height:15px;color:#101010;font-weight:400;white-space:nowrap;letter-spacing:-0.238px;">sagabharathi.kolanchiyappan@solverminds.sg</span></div></div>
<div style="position:absolute;left:326.4px;top:265px;width:1px;height:299.4px;background:#c9c9c9;"></div>
<div style="position:absolute;left:326.4px;top:563.6px;width:887.4px;height:1px;background:#c9c9c9;"></div>
<div style="position:absolute;left:1212.8px;top:546px;width:1px;height:18px;background:#c9c9c9;"></div>
<div style="position:absolute;left:1203.4px;top:265px;width:10px;height:276px;background:#8c8c8c;"></div>
<div style="position:absolute;left:1203.4px;top:266px;width:10px;height:44px;background:#ededed;border-radius:5px;"></div>
<div style="position:absolute;left:1203.4px;top:543.4px;width:10px;height:2.4px;background:#8c8c8c;"></div>
<div style="position:absolute;left:1190px;top:543.2px;width:9.6px;height:1px;background:#9a9a9a;"></div>
<div style="position:absolute;left:327.4px;top:554px;width:862.6px;height:9.6px;background:#8c8c8c;"></div>
<div style="position:absolute;left:327.4px;top:554px;width:693px;height:9.6px;background:#ededed;border-radius:5px;"></div>
<div style="position:absolute;left:1110px;top:585px;width:103.8px;height:36px;background:#2d74f0;border-radius:4px;box-shadow:0 3px 1px -2px rgba(0,0,0,.2),0 2px 2px rgba(0,0,0,.14),0 1px 5px rgba(0,0,0,.12);"></div>
<span id="collab" style="position:absolute;left:1162.00px;transform:translateX(-50%);top:593.75px;font-size:14px;line-height:17px;color:#fff;font-weight:700;white-space:nowrap;letter-spacing:-0.408px;margin-left:-0.204px;">Collaborate</span>
</div></body></html>
